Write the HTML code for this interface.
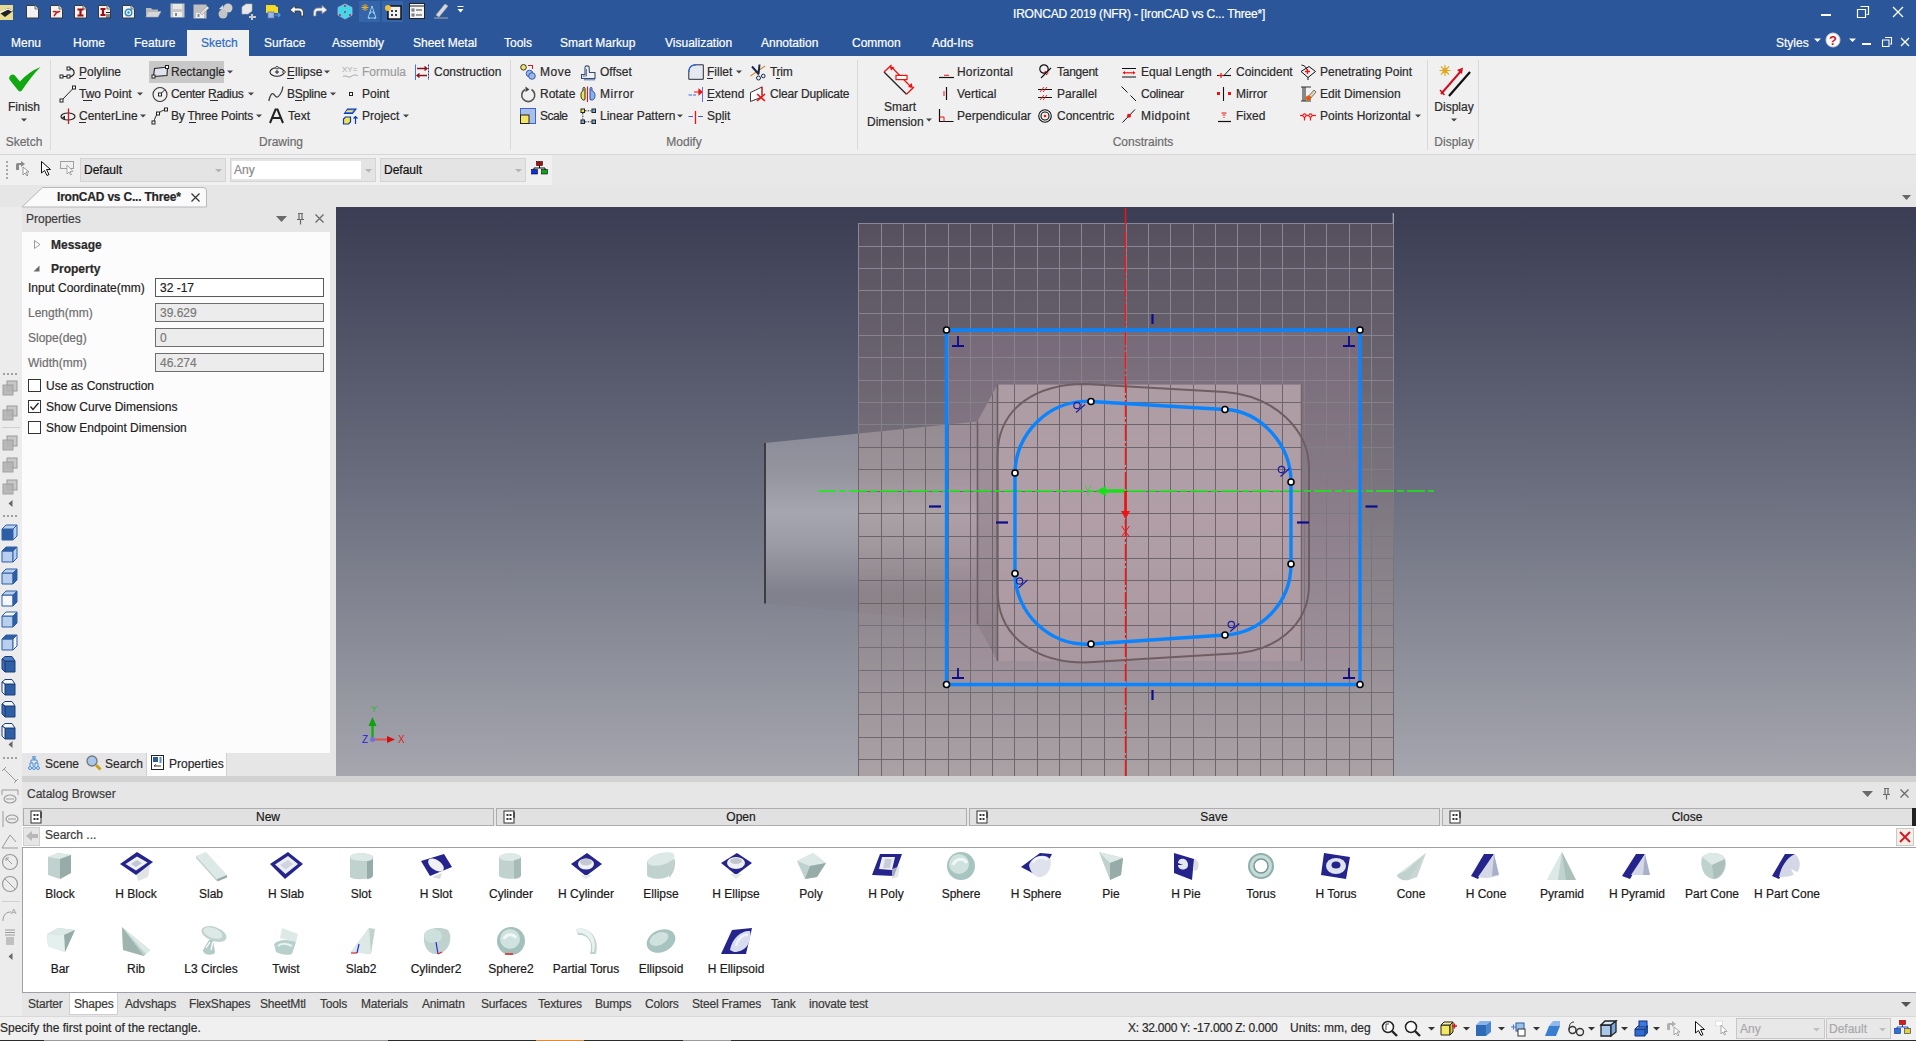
<!DOCTYPE html>
<html><head><meta charset="utf-8">
<style>
*{box-sizing:border-box}
html,body{margin:0;padding:0}
body{width:1916px;height:1041px;position:relative;overflow:hidden;font-family:"Liberation Sans",sans-serif;font-size:12px;color:#1e1e1e;background:#f0f0f0}
.a{position:absolute;white-space:nowrap}
.t{position:absolute;white-space:nowrap;line-height:14px;-webkit-text-stroke:0.2px currentColor}
svg{position:absolute;overflow:visible}
</style></head><body>
<div class="a" style="left:0px;top:0px;width:1916px;height:56px;background:#2b579a"></div>
<div class="t" style="left:1013px;top:7px;color:#fff;letter-spacing:-0.2px">IRONCAD 2019 (NFR) - [IronCAD vs C... Three*]</div>
<div class="a" style="left:187px;top:30px;width:62px;height:27px;background:#f0f0f0"></div>
<div class="t" style="left:11px;top:36px;color:#fff;">Menu</div>
<div class="t" style="left:73px;top:36px;color:#fff;">Home</div>
<div class="t" style="left:134px;top:36px;color:#fff;">Feature</div>
<div class="t" style="left:264px;top:36px;color:#fff;">Surface</div>
<div class="t" style="left:332px;top:36px;color:#fff;">Assembly</div>
<div class="t" style="left:413px;top:36px;color:#fff;">Sheet Metal</div>
<div class="t" style="left:504px;top:36px;color:#fff;">Tools</div>
<div class="t" style="left:560px;top:36px;color:#fff;">Smart Markup</div>
<div class="t" style="left:665px;top:36px;color:#fff;">Visualization</div>
<div class="t" style="left:761px;top:36px;color:#fff;">Annotation</div>
<div class="t" style="left:852px;top:36px;color:#fff;">Common</div>
<div class="t" style="left:932px;top:36px;color:#fff;">Add-Ins</div>
<div class="t" style="left:1776px;top:36px;color:#fff;">Styles</div>
<div class="t" style="left:201px;top:36px;color:#2b6cc4;">Sketch</div>
<div class="a" style="left:0px;top:56px;width:1916px;height:99px;background:#f0f0f0;border-bottom:1px solid #d6d6d6"></div>
<div class="a" style="left:0px;top:155px;width:1916px;height:29px;background:#e9e9e9"></div>
<div class="a" style="left:0px;top:184px;width:1916px;height:23px;background:#e3e3e3"></div>
<div class="a" style="left:0px;top:207px;width:22px;height:809px;background:#ececec"></div>
<div class="a" style="left:22px;top:207px;width:314px;height:569px;background:#e6e6e6"></div>
<div class="a" style="left:22px;top:232px;width:308px;height:521px;background:#fcfcfc"></div>
<div class="a" style="left:22px;top:776px;width:1894px;height:6px;background:#d2d2d2"></div>
<div class="a" style="left:22px;top:782px;width:1894px;height:234px;background:#e6e6e6"></div>
<div class="a" style="left:0px;top:1016px;width:1916px;height:25px;background:#f0f0f0;border-top:1px solid #d9d9d9"></div>
<svg style="left:0px;top:4px" width="14" height="17" viewBox="0 0 14 17"><rect x="0" y="1" width="13" height="15" fill="#e8dc90"/><path d="M0 9L8 4L13 7L5 13Z" fill="#222"/><path d="M0 9L8 5L12 7" stroke="#fff" fill="none" stroke-width="1.2"/></svg>
<svg style="left:25px;top:4px" width="15" height="15" viewBox="0 0 15 15"><path d="M1.5 1.5H10L13.5 5V14H1.5Z" fill="#f2f2f2" stroke="#3a3a3a" stroke-width="1"/><path d="M10 1.5V5H13.5" fill="#ddd" stroke="#555" stroke-width=".8"/></svg>
<svg style="left:49px;top:4px" width="15" height="15" viewBox="0 0 15 15"><path d="M1.5 1.5H10L13.5 5V14H1.5Z" fill="#f2f2f2" stroke="#3a3a3a" stroke-width="1"/><path d="M10 1.5V5H13.5" fill="#ddd" stroke="#555" stroke-width=".8"/><path d="M4 8C6 6 8 10 11 7M5 12L8 8" stroke="#d01818" stroke-width="1.6" fill="none"/></svg>
<svg style="left:73px;top:4px" width="15" height="15" viewBox="0 0 15 15"><path d="M1.5 1.5H10L13.5 5V14H1.5Z" fill="#f2f2f2" stroke="#3a3a3a" stroke-width="1"/><path d="M10 1.5V5H13.5" fill="#ddd" stroke="#555" stroke-width=".8"/><path d="M4.5 5.5H10.5M7.5 5.5V11.5M4.5 11.5H10.5" stroke="#a01010" stroke-width="2.2"/></svg>
<svg style="left:97px;top:4px" width="15" height="15" viewBox="0 0 15 15"><path d="M1.5 1.5H10L13.5 5V14H1.5Z" fill="#f2f2f2" stroke="#3a3a3a" stroke-width="1"/><path d="M10 1.5V5H13.5" fill="#ddd" stroke="#555" stroke-width=".8"/><path d="M3.5 5H8.5M6 5V11M3.5 11H8.5" stroke="#a01010" stroke-width="2.2"/><path d="M9 8.5H13M9 11H13M9 13H13" stroke="#222" stroke-width="1"/></svg>
<svg style="left:121px;top:4px" width="15" height="15" viewBox="0 0 15 15"><path d="M1.5 1.5H10L13.5 5V14H1.5Z" fill="#f2f2f2" stroke="#3a3a3a" stroke-width="1"/><path d="M10 1.5V5H13.5" fill="#ddd" stroke="#555" stroke-width=".8"/><circle cx="7.5" cy="8.5" r="3.3" fill="none" stroke="#2a8ac8" stroke-width="1.4"/><circle cx="7.5" cy="8.5" r="1.2" fill="#2a8ac8"/></svg>
<svg style="left:145px;top:5px" width="17" height="14" viewBox="0 0 17 14"><path d="M1 3H6L7.5 4.5H13V12H1Z" fill="#b8b8b8"/><path d="M3 6.5H16L13 12H1Z" fill="#d8d8d8" stroke="#aaa" stroke-width=".6"/></svg>
<svg style="left:170px;top:3px" width="15" height="15" viewBox="0 0 15 15"><rect x="0.5" y="0.5" width="14" height="14" fill="#c8c8c8"/><rect x="3" y="1" width="9" height="5" fill="#e8e8e8"/><rect x="3" y="9" width="9" height="5" fill="#f0f0f0"/><rect x="5" y="10" width="2" height="3" fill="#888"/></svg>
<svg style="left:193px;top:4px" width="16" height="15" viewBox="0 0 16 15"><rect x="0.5" y="0.5" width="13" height="14" fill="#c0c0c0"/><rect x="3" y="9" width="8" height="5" fill="#f0f0f0"/><rect x="4.5" y="10" width="2" height="3" fill="#888"/><path d="M7 9L14 2L16 4L9 11Z" fill="#ddd" stroke="#999" stroke-width=".6"/></svg>
<svg style="left:217px;top:3px" width="17" height="16" viewBox="0 0 17 16"><circle cx="11" cy="5" r="4.5" fill="#cfcfcf"/><circle cx="6" cy="11" r="4.5" fill="#c4c4c4"/><path d="M2 6L6 2L7 7Z" fill="#ddd"/></svg>
<svg style="left:241px;top:3px" width="17" height="17" viewBox="0 0 17 17"><path d="M1 4L5 1H11L11 8L7 11H1Z" fill="#e8e8e8" stroke="#bbb" stroke-width=".6"/><path d="M11 11V17M8 14H15" stroke="#c8c8c8" stroke-width="2"/></svg>
<svg style="left:265px;top:3px" width="17" height="17" viewBox="0 0 17 17"><path d="M1 2H10L13 5H1Z" fill="#f0d820"/><rect x="1" y="4" width="12" height="6" fill="#f4dc28"/><rect x="3" y="9" width="6" height="6" fill="#a0b8e0" stroke="#5a7ab8" stroke-width=".8"/><path d="M10 12H15M13 10L15 12L13 14" stroke="#5a9ae8" stroke-width="1.2" fill="none"/></svg>
<svg style="left:289px;top:4px" width="15" height="13" viewBox="0 0 15 13"><path d="M1 6L6 1.5V4H10C13 4 14.5 6 14.5 9V12H12V9C12 7.5 11 7 10 7H6V10Z" fill="#f4f4f4" stroke="#333" stroke-width=".8"/></svg>
<svg style="left:313px;top:4px" width="15" height="13" viewBox="0 0 15 13"><path d="M14 6L9 1.5V4H5C2 4 0.5 6 0.5 9V12H3V9C3 7.5 4 7 5 7H9V10Z" fill="#f4f4f4" stroke="#888" stroke-width=".8"/></svg>
<svg style="left:337px;top:3px" width="16" height="17" viewBox="0 0 16 17"><path d="M8 1L15 4.5V12L8 16L1 12V4.5Z" fill="#40d8ec" stroke="#a0b8d8" stroke-width=".8"/><circle cx="8" cy="3" r=".9" fill="#e01020"/><circle cx="8" cy="9" r=".9" fill="#e01020"/><circle cx="3" cy="12" r=".9" fill="#e01020"/><circle cx="13" cy="12" r=".9" fill="#e01020"/></svg>
<div class="a" style="left:359px;top:1px;width:21px;height:21px;background:#3565a8"></div>
<svg style="left:361px;top:3px" width="17" height="17" viewBox="0 0 17 17"><path d="M4 1V8M0.5 4.5H7.5M1.5 2L6.5 7M6.5 2L1.5 7" stroke="#f0b020" stroke-width="1"/><path d="M11 3L7 15M11 3L15 15M9 9H13M8 15H15" stroke="#8ec8ec" stroke-width="1" fill="none"/><circle cx="11" cy="4" r="1" fill="#8ec8ec"/><circle cx="9" cy="10" r="1" fill="#8ec8ec"/><circle cx="13" cy="10" r="1" fill="#8ec8ec"/><circle cx="8" cy="15" r="1" fill="#8ec8ec"/><circle cx="14" cy="15" r="1" fill="#8ec8ec"/></svg>
<div class="a" style="left:382px;top:1px;width:21px;height:21px;background:#3565a8"></div>
<svg style="left:384px;top:3px" width="18" height="17" viewBox="0 0 18 17"><rect x="4" y="3" width="13" height="13" fill="#f0f0f0" stroke="#111" stroke-width="1.5"/><path d="M8 7V9M8 11V13M12 7V9M12 11V13" stroke="#111" stroke-width="1.6"/><circle cx="4" cy="5" r="3" fill="#f0c040"/></svg>
<svg style="left:409px;top:3px" width="16" height="16" viewBox="0 0 16 16"><rect x="0.5" y="0.5" width="15" height="15" fill="#f4f4f4" stroke="#222"/><path d="M1 3H15" stroke="#222"/><rect x="3" y="6" width="2" height="2" fill="none" stroke="#444" stroke-width=".8"/><rect x="3" y="11" width="2" height="2" fill="none" stroke="#444" stroke-width=".8"/><path d="M7 7H13M7 12H13" stroke="#444"/></svg>
<svg style="left:433px;top:2px" width="16" height="17" viewBox="0 0 16 17"><path d="M3 13L12 2L15 4L6 15Z" fill="#d8d8d8" stroke="#aaa" stroke-width=".6"/><path d="M1 16H15" stroke="#aaa"/></svg>
<svg style="left:457px;top:5px" width="7" height="10" viewBox="0 0 7 10"><path d="M0.5 1.5H6.5" stroke="#fff"/><path d="M0.5 4H6.5L3.5 7.5Z" fill="#fff"/></svg>
<div class="a" style="left:1821px;top:14px;width:10px;height:2px;background:#fff"></div>
<svg style="left:1857px;top:6px" width="12" height="12" viewBox="0 0 12 12"><path d="M3.5 0.5H11.5V8.5H9.5M0.5 3.5H8.5V11.5H0.5Z" fill="none" stroke="#fff" stroke-width="1.2"/></svg>
<svg style="left:1892px;top:6px" width="12" height="12" viewBox="0 0 12 12"><path d="M1 1L11 11M11 1L1 11" stroke="#fff" stroke-width="1.3"/></svg>
<svg style="left:1814px;top:38px" width="8" height="5" viewBox="0 0 8 5"><path d="M0 0.5H7L3.5 4Z" fill="#fff"/></svg>
<svg style="left:1825px;top:32px" width="16" height="16" viewBox="0 0 16 16"><circle cx="8" cy="8" r="7" fill="#fff" stroke="#d0d0d0"/><text x="8" y="13" text-anchor="middle" font-size="13" font-weight="bold" fill="#e01020" font-family="Liberation Sans">?</text></svg>
<svg style="left:1849px;top:38px" width="8" height="5" viewBox="0 0 8 5"><path d="M0 0.5H7L3.5 4Z" fill="#fff"/></svg>
<div class="a" style="left:1862px;top:43px;width:9px;height:2px;background:#fff"></div>
<svg style="left:1882px;top:37px" width="10" height="10" viewBox="0 0 10 10"><path d="M3 0.5H9.5V7H8M0.5 3H7V9.5H0.5Z" fill="none" stroke="#fff" stroke-width="1.1"/></svg>
<svg style="left:1900px;top:37px" width="10" height="10" viewBox="0 0 10 10"><path d="M1 1L9 9M9 1L1 9" stroke="#fff" stroke-width="1.3"/></svg>
<div class="a" style="left:50px;top:60px;width:1px;height:90px;background:#d9d9d9"></div>
<div class="a" style="left:510px;top:60px;width:1px;height:90px;background:#d9d9d9"></div>
<div class="a" style="left:857px;top:60px;width:1px;height:90px;background:#d9d9d9"></div>
<div class="a" style="left:1427px;top:60px;width:1px;height:90px;background:#d9d9d9"></div>
<div class="a" style="left:1478px;top:60px;width:1px;height:90px;background:#d9d9d9"></div>
<div class="t" style="left:-76px;width:200px;text-align:center;top:135px;color:#6d6d6d;">Sketch</div>
<div class="t" style="left:181px;width:200px;text-align:center;top:135px;color:#6d6d6d;">Drawing</div>
<div class="t" style="left:584px;width:200px;text-align:center;top:135px;color:#6d6d6d;">Modify</div>
<div class="t" style="left:1043px;width:200px;text-align:center;top:135px;color:#6d6d6d;">Constraints</div>
<div class="t" style="left:1354px;width:200px;text-align:center;top:135px;color:#6d6d6d;">Display</div>
<svg style="left:8px;top:66px" width="34" height="27" viewBox="0 0 34 27"><path d="M1.5 10.5Q3.5 7.5 6.5 9L11.9 15.5Q21 5.5 32.5 1Q24 9.5 13.8 24.5Q12 26.5 10.2 24.5L1.8 14Q0.5 12.5 1.5 10.5Z" fill="#12a812"/></svg>
<div class="t" style="left:-76px;width:200px;text-align:center;top:100px;color:#2b2b2b;">Finish</div>
<svg style="left:21px;top:118px" width="6" height="4" viewBox="0 0 6 4"><path d="M0 0.5h6l-3 3z" fill="#444"/></svg>
<div class="a" style="left:149px;top:61px;width:75px;height:22px;background:#c8c8c8"></div>
<svg style="left:60px;top:64px" width="16" height="16" viewBox="0 0 16 16"><path d="M1.5 12.5H8.5" stroke="#222" fill="none"/><path d="M8.5 4.5C16 3.5 16 13.5 8.5 12.5" stroke="#222" fill="none" stroke-width="1.2"/><rect x="0.0" y="11.0" width="3" height="3" fill="#fff" stroke="#222" stroke-width="1"/><rect x="7.0" y="11.0" width="3" height="3" fill="#fff" stroke="#222" stroke-width="1"/><rect x="7.0" y="3.0" width="3" height="3" fill="#fff" stroke="#222" stroke-width="1"/></svg>
<div class="t" style="left:79px;top:65px;color:#2b2b2b;">Polyline</div>
<div class="a" style="left:79px;top:78px;width:7px;height:1px;background:#2b2b2b"></div>
<svg style="left:60px;top:86px" width="16" height="16" viewBox="0 0 16 16"><path d="M1.5 14.5L14 1.5" stroke="#222" fill="none"/><rect x="0.0" y="13.0" width="3" height="3" fill="#fff" stroke="#222" stroke-width="1"/><rect x="12.5" y="0.0" width="3" height="3" fill="#fff" stroke="#222" stroke-width="1"/></svg>
<div class="t" style="left:79px;top:87px;color:#2b2b2b;">Two Point</div>
<div class="a" style="left:83px;top:100px;width:9px;height:1px;background:#2b2b2b"></div>
<svg style="left:137px;top:92px" width="6" height="4" viewBox="0 0 6 4"><path d="M0 0.5h6l-3 3z" fill="#444"/></svg>
<svg style="left:60px;top:108px" width="16" height="16" viewBox="0 0 16 16"><ellipse cx="8" cy="8.5" rx="7" ry="3.5" stroke="#222" fill="none" stroke-width="1.2"/><path d="M2 9.5l3 -2v4z" fill="#222"/><path d="M8.5 0.5V16" stroke="#d2141e" stroke-width="1.3"/></svg>
<div class="t" style="left:79px;top:109px;color:#2b2b2b;">CenterLine</div>
<div class="a" style="left:79px;top:122px;width:7px;height:1px;background:#2b2b2b"></div>
<svg style="left:140px;top:114px" width="6" height="4" viewBox="0 0 6 4"><path d="M0 0.5h6l-3 3z" fill="#444"/></svg>
<svg style="left:152px;top:64px" width="16" height="16" viewBox="0 0 16 16"><path d="M1.5 12.5L15 11.5L15.5 3L2.5 4.5Z" fill="#dfe3ee" stroke="#222" stroke-width="1.1"/><rect x="0.0" y="11.0" width="3" height="3" fill="#fff" stroke="#222" stroke-width="1"/><rect x="13.5" y="1.5" width="3" height="3" fill="#fff" stroke="#222" stroke-width="1"/></svg>
<div class="t" style="left:171px;top:65px;color:#2b2b2b;">Rectangle</div>
<svg style="left:227px;top:70px" width="6" height="4" viewBox="0 0 6 4"><path d="M0 0.5h6l-3 3z" fill="#444"/></svg>
<svg style="left:152px;top:86px" width="16" height="16" viewBox="0 0 16 16"><circle cx="8" cy="8.5" r="7" fill="none" stroke="#333" stroke-width="1.1"/><path d="M8 8.5L13 3.5" stroke="#222"/><rect x="6.5" y="7.0" width="3" height="3" fill="#fff" stroke="#222" stroke-width="1"/></svg>
<div class="t" style="left:171px;top:87px;color:#2b2b2b;letter-spacing:-0.33px">Center Radius</div>
<div class="a" style="left:210px;top:100px;width:8px;height:1px;background:#2b2b2b"></div>
<svg style="left:248px;top:92px" width="6" height="4" viewBox="0 0 6 4"><path d="M0 0.5h6l-3 3z" fill="#444"/></svg>
<svg style="left:152px;top:108px" width="16" height="16" viewBox="0 0 16 16"><path d="M1.5 14.5C3 10 4 7 6 5.5S11 2 14 1.5" stroke="#222" fill="none"/><rect x="0.0" y="13.0" width="3" height="3" fill="#fff" stroke="#222" stroke-width="1"/><rect x="4.5" y="4.0" width="3" height="3" fill="#fff" stroke="#222" stroke-width="1"/><rect x="12.5" y="0.0" width="3" height="3" fill="#fff" stroke="#222" stroke-width="1"/></svg>
<div class="t" style="left:171px;top:109px;color:#2b2b2b;letter-spacing:-0.21px">By Three Points</div>
<div class="a" style="left:189px;top:122px;width:7px;height:1px;background:#2b2b2b"></div>
<svg style="left:256px;top:114px" width="6" height="4" viewBox="0 0 6 4"><path d="M0 0.5h6l-3 3z" fill="#444"/></svg>
<svg style="left:269px;top:64px" width="16" height="16" viewBox="0 0 16 16"><ellipse cx="8" cy="8" rx="7" ry="4.3" fill="none" stroke="#222" stroke-width="1.1"/><path d="M8 6v4M6 8h4" stroke="#222"/><circle cx="8" cy="3.7" r="1.3" fill="#fff" stroke="#222" stroke-width=".8"/><circle cx="15" cy="8" r="1.3" fill="#fff" stroke="#222" stroke-width=".8"/></svg>
<div class="t" style="left:287px;top:65px;color:#2b2b2b;">Ellipse</div>
<div class="a" style="left:287px;top:78px;width:7px;height:1px;background:#2b2b2b"></div>
<svg style="left:324px;top:70px" width="6" height="4" viewBox="0 0 6 4"><path d="M0 0.5h6l-3 3z" fill="#444"/></svg>
<svg style="left:268px;top:86px" width="16" height="16" viewBox="0 0 16 16"><path d="M0.8 15C2 9 4 6 6 8.5S9 13 12 8.5S14.5 3 14.8 0.5" stroke="#444" fill="none" stroke-width="1.3"/></svg>
<div class="t" style="left:287px;top:87px;color:#2b2b2b;letter-spacing:-0.25px">BSpline</div>
<div class="a" style="left:295px;top:100px;width:7px;height:1px;background:#2b2b2b"></div>
<svg style="left:330px;top:92px" width="6" height="4" viewBox="0 0 6 4"><path d="M0 0.5h6l-3 3z" fill="#444"/></svg>
<svg style="left:269px;top:108px" width="16" height="16" viewBox="0 0 16 16"><path d="M1 15L6.5 1.5H8.5L14 15M3.5 10H11.5" stroke="#222" fill="none" stroke-width="2"/></svg>
<div class="t" style="left:288px;top:109px;color:#2b2b2b;">Text</div>
<svg style="left:342px;top:64px" width="18" height="16" viewBox="0 0 18 16"><text x="0" y="8" font-size="8" fill="#aaa" font-family="Liberation Sans">XY=</text><path d="M1 12.5C4 10.5 6 14.5 9 12.5S14 10.5 16 12" stroke="#aaa" fill="none"/></svg>
<div class="t" style="left:362px;top:65px;color:#9d9d9d;">Formula</div>
<div class="a" style="left:349px;top:92px;width:4px;height:4px;border:1px solid #222;background:#fff"></div>
<div class="t" style="left:362px;top:87px;color:#2b2b2b;">Point</div>
<svg style="left:342px;top:108px" width="17" height="16" viewBox="0 0 17 16"><path d="M2.5 5.5L5.5 1H14L10.5 5.5Z" fill="#4a7dd8" stroke="#0b39b8" stroke-width="1.1"/><path d="M3.5 4L5.5 2.2H12L10 4Z" fill="#f1e26a"/><path d="M1.5 11L3.5 9H8.5V14L6.5 16H1.5Z" fill="#f4e34a" stroke="#0b39b8" stroke-width="1.2"/><path d="M13.5 16V8.5M11.5 10.5L13.5 8.5L15.5 10.5" stroke="#0b39b8" stroke-width="1.2" fill="none"/></svg>
<div class="t" style="left:362px;top:109px;color:#2b2b2b;">Project</div>
<svg style="left:403px;top:114px" width="6" height="4" viewBox="0 0 6 4"><path d="M0 0.5h6l-3 3z" fill="#444"/></svg>
<svg style="left:415px;top:64px" width="16" height="16" viewBox="0 0 16 16"><path d="M0.5 0.5V16" stroke="#3f78d6"/><path d="M13.5 0.5V16" stroke="#1f2f8a" stroke-dasharray="2 1"/><path d="M2 4.5H12M9.5 2.5L12 4.5L9.5 6.5" stroke="#8b0f1a" fill="none" stroke-width="1.3"/><path d="M12 11.5H2M4.5 9.5L2 11.5L4.5 13.5" stroke="#8b0f1a" fill="none" stroke-width="1.3"/></svg>
<div class="t" style="left:434px;top:65px;color:#2b2b2b;">Construction</div>
<svg style="left:520px;top:64px" width="16" height="16" viewBox="0 0 16 16"><circle cx="3.5" cy="3.3" r="2.8" fill="#f3e26a" stroke="#222" stroke-width=".9"/><circle cx="9.5" cy="9.5" r="3.3" fill="#9cb8e8" stroke="#2a4fa8" stroke-width=".9"/><circle cx="12" cy="12" r="3.3" fill="#9cb8e8" stroke="#2a4fa8" stroke-width=".9"/><path d="M8 1.5H12.5V5" stroke="#cc1d2a" fill="none" stroke-width="1.1"/></svg>
<div class="t" style="left:540px;top:65px;color:#2b2b2b;letter-spacing:0.5px">Move</div>
<svg style="left:520px;top:86px" width="16" height="16" viewBox="0 0 16 16"><path d="M11.5 3.5A6.5 6.5 0 1 1 5 3.5" stroke="#555" stroke-width="1.6" fill="none"/><path d="M5.5 0.5L9.5 3.5L5.5 6Z" fill="#444"/></svg>
<div class="t" style="left:540px;top:87px;color:#2b2b2b;">Rotate</div>
<svg style="left:520px;top:108px" width="16" height="16" viewBox="0 0 16 16"><rect x="0.5" y="0.5" width="15" height="15" fill="#a9bfea" stroke="#3a68c8"/><rect x="0.5" y="7" width="8.5" height="8.5" fill="#f4e564" stroke="#222" stroke-width="1"/></svg>
<div class="t" style="left:540px;top:109px;color:#2b2b2b;letter-spacing:-0.5px">Scale</div>
<svg style="left:580px;top:64px" width="16" height="16" viewBox="0 0 16 16"><path d="M1.5 14.5V10.5H5V3.5C5 1.5 7.5 1.5 9 2.5L9.5 8.5H15V14.5Z" fill="none" stroke="#3a4a6a" stroke-width="1.1"/><path d="M3 12.5V12H6.5V5" stroke="#4a6ab0" fill="none" stroke-width=".9"/><path d="M4 15.8H15" stroke="#4a6ab0"/></svg>
<div class="t" style="left:600px;top:65px;color:#2b2b2b;">Offset</div>
<svg style="left:580px;top:86px" width="16" height="16" viewBox="0 0 16 16"><path d="M1 9.5C1 6 2 5 3 5V2.5C3 1 5 1 5 2.5V13.5C3 15 1 13 1 9.5Z" fill="#f4e34a" stroke="#222"/><path d="M7.5 0.5V16" stroke="#f01010" stroke-width="1.1"/><path d="M10 2.5C10 1 12 1 12 2.5V5C13 5 15 6 15 9.5S13 15 10 13.5Z" fill="#8bb0ea" stroke="#2a4fa8"/></svg>
<div class="t" style="left:600px;top:87px;color:#2b2b2b;letter-spacing:0.5px">Mirror</div>
<svg style="left:580px;top:108px" width="16" height="16" viewBox="0 0 16 16"><rect x="1" y="1" width="3.5" height="3.5" fill="#f4e34a" stroke="#222"/><rect x="12" y="1" width="3.5" height="3.5" fill="#7fa8e6" stroke="#222"/><rect x="1" y="12" width="3.5" height="3.5" fill="#7fa8e6" stroke="#222"/><rect x="12" y="12" width="3.5" height="3.5" fill="#7fa8e6" stroke="#222"/><path d="M5 2.8H11.5M5 13.8H11.5M2.8 5V11.5" stroke="#222" stroke-dasharray="1.5 1.2"/></svg>
<div class="t" style="left:600px;top:109px;color:#2b2b2b;">Linear Pattern</div>
<svg style="left:677px;top:114px" width="6" height="4" viewBox="0 0 6 4"><path d="M0 0.5h6l-3 3z" fill="#444"/></svg>
<svg style="left:688px;top:64px" width="16" height="16" viewBox="0 0 16 16"><path d="M0.8 15.3V8C0.8 3 3.5 0.8 8 0.8H15.3V15.3Z" fill="#e4e8f0" stroke="#2a2a3a" stroke-width="1"/><path d="M0.8 8C0.8 3 3.5 0.8 8 0.8" stroke="#2a6cd8" fill="none" stroke-width="1.2"/></svg>
<div class="t" style="left:707px;top:65px;color:#2b2b2b;">Fillet</div>
<div class="a" style="left:707px;top:78px;width:6px;height:1px;background:#2b2b2b"></div>
<svg style="left:736px;top:70px" width="6" height="4" viewBox="0 0 6 4"><path d="M0 0.5h6l-3 3z" fill="#444"/></svg>
<svg style="left:688px;top:86px" width="16" height="16" viewBox="0 0 16 16"><path d="M0.5 9H4M5 9H8" stroke="#3f6fd0"/><path d="M6 6H14M11 3.5L14 6L11 8.5Z" stroke="#f01010" fill="#f01010" stroke-width="1.2"/><path d="M14.5 1V16" stroke="#6a6ae8"/></svg>
<div class="t" style="left:707px;top:87px;color:#2b2b2b;">Extend</div>
<div class="a" style="left:707px;top:100px;width:6px;height:1px;background:#2b2b2b"></div>
<svg style="left:688px;top:108px" width="16" height="16" viewBox="0 0 16 16"><path d="M0.5 8.5H5M10 8.5H15" stroke="#3f5fd0"/><path d="M7.5 3V16" stroke="#f01010" stroke-width="1.3"/></svg>
<div class="t" style="left:707px;top:109px;color:#2b2b2b;">Split</div>
<div class="a" style="left:721px;top:122px;width:3px;height:1px;background:#2b2b2b"></div>
<svg style="left:750px;top:64px" width="16" height="16" viewBox="0 0 16 16"><path d="M0.5 12L15 2" stroke="#d88a30" stroke-width="1.2"/><path d="M2 2.5L9 10.5M9.5 0.5L8.5 10" stroke="#1a2a4a" stroke-width="2"/><circle cx="8.5" cy="14" r="2" fill="none" stroke="#1a2a4a"/><circle cx="13.3" cy="12" r="1.8" fill="none" stroke="#1a2a4a"/></svg>
<div class="t" style="left:770px;top:65px;color:#2b2b2b;letter-spacing:-0.3px">Trim</div>
<div class="a" style="left:776px;top:78px;width:4px;height:1px;background:#2b2b2b"></div>
<svg style="left:750px;top:86px" width="16" height="16" viewBox="0 0 16 16"><path d="M0.5 6.5L12 1V11L0.5 15.5Z" fill="#fff" stroke="#222" stroke-width=".9"/><path d="M7 8L15 15M15 8L7 15" stroke="#f01010" stroke-width="1.6"/><path d="M12 0.5V9" stroke="#f01010"/></svg>
<div class="t" style="left:770px;top:87px;color:#2b2b2b;letter-spacing:-0.18px">Clear Duplicate</div>
<svg style="left:880px;top:62px" width="40" height="36" viewBox="0 0 40 36"><path d="M4 10L26.5 32.2" stroke="#222" stroke-width="1.3"/><path d="M4 10L11.5 3M26.5 32.2L34 25" stroke="#f01010" stroke-width="1.3"/><path d="M11.5 5L31 25" stroke="#f01010" stroke-width="1.2"/><path d="M9.5 4L14.5 5.5L11 8.5Z M33 26L28 25L31.5 21Z" fill="#f01010"/><rect x="16" y="13.4" width="11" height="4.2" fill="#fff" stroke="#f01010" stroke-width="1.2"/></svg>
<div class="t" style="left:800px;width:200px;text-align:center;top:100px;color:#2b2b2b;">Smart</div>
<div class="t" style="left:867px;top:115px;color:#2b2b2b;">Dimension</div>
<svg style="left:926px;top:118px" width="6" height="4" viewBox="0 0 6 4"><path d="M0 0.5h6l-3 3z" fill="#444"/></svg>
<svg style="left:939px;top:64px" width="16" height="16" viewBox="0 0 16 16"><path d="M0 13.5H15" stroke="#111" stroke-width="1.2"/><path d="M5 11.3H10" stroke="#f01010" stroke-width="1"/></svg>
<div class="t" style="left:957px;top:65px;color:#2b2b2b;letter-spacing:0.2px">Horizontal</div>
<svg style="left:939px;top:86px" width="16" height="16" viewBox="0 0 16 16"><path d="M7.5 1V14" stroke="#111" stroke-width="1.2"/><path d="M5 5V10" stroke="#f01010" stroke-width="1"/></svg>
<div class="t" style="left:957px;top:87px;color:#2b2b2b;">Vertical</div>
<svg style="left:939px;top:108px" width="16" height="16" viewBox="0 0 16 16"><path d="M0.5 1V13.5H14.5" stroke="#111" fill="none" stroke-width="1.2"/><path d="M0.5 9H5V13.5" stroke="#f01010" fill="none"/></svg>
<div class="t" style="left:957px;top:109px;color:#2b2b2b;">Perpendicular</div>
<svg style="left:1038px;top:64px" width="16" height="16" viewBox="0 0 16 16"><circle cx="6" cy="5" r="4.2" fill="none" stroke="#111" stroke-width="1.2"/><path d="M3 14L13 4" stroke="#111" stroke-width="1.1"/><path d="M5.5 9L8 7M8 11L10.5 9" stroke="#f01010"/></svg>
<div class="t" style="left:1057px;top:65px;color:#2b2b2b;letter-spacing:-0.25px">Tangent</div>
<svg style="left:1038px;top:86px" width="16" height="16" viewBox="0 0 16 16"><path d="M0 3.5H14M0 11.5H14" stroke="#111" stroke-width="1.1"/><path d="M2 6L6 1M5 6L9 1M2 14L6 9M5 14L9 9" stroke="#f01010" stroke-width=".9"/></svg>
<div class="t" style="left:1057px;top:87px;color:#2b2b2b;">Parallel</div>
<svg style="left:1038px;top:108px" width="16" height="16" viewBox="0 0 16 16"><circle cx="7" cy="8" r="6.3" fill="none" stroke="#111" stroke-width="1.1"/><circle cx="7" cy="8" r="4" fill="none" stroke="#111" stroke-width="1.1"/><circle cx="7" cy="8" r="1.3" fill="#f01010"/></svg>
<div class="t" style="left:1057px;top:109px;color:#2b2b2b;">Concentric</div>
<svg style="left:1122px;top:64px" width="16" height="16" viewBox="0 0 16 16"><path d="M0 4.5H14M0 13H14" stroke="#111" stroke-width="1.1"/><path d="M2 8.8H12" stroke="#f01010" stroke-width="1.2"/><path d="M0.5 8.8L3 7V10.6ZM13.5 8.8L11 7V10.6Z" fill="#f01010"/></svg>
<div class="t" style="left:1141px;top:65px;color:#2b2b2b;">Equal Length</div>
<svg style="left:1121px;top:86px" width="16" height="16" viewBox="0 0 16 16"><path d="M0.5 0.5L6.5 6.5M9.5 9.5L15 15" stroke="#111" stroke-width="1"/></svg>
<div class="t" style="left:1141px;top:87px;color:#2b2b2b;letter-spacing:-0.24px">Colinear</div>
<svg style="left:1122px;top:108px" width="16" height="16" viewBox="0 0 16 16"><path d="M0.5 14.5L13 1.5" stroke="#111" stroke-width="1"/><circle cx="7" cy="7.8" r="2" fill="#f01010"/></svg>
<div class="t" style="left:1141px;top:109px;color:#2b2b2b;letter-spacing:0.45px">Midpoint</div>
<svg style="left:1217px;top:64px" width="16" height="16" viewBox="0 0 16 16"><path d="M0 11.5H14" stroke="#111" stroke-width="1.1"/><path d="M7 11.5L14 4" stroke="#111" stroke-width="1"/><path d="M4 9V14M1.5 11.5H6.5" stroke="#f01010" stroke-width="1.2"/></svg>
<div class="t" style="left:1236px;top:65px;color:#2b2b2b;">Coincident</div>
<svg style="left:1217px;top:86px" width="16" height="16" viewBox="0 0 16 16"><rect x="0" y="6" width="3" height="3" fill="#f01010"/><rect x="11" y="6" width="3" height="3" fill="#f01010"/><path d="M6.5 1V15" stroke="#111" stroke-width="1.1"/></svg>
<div class="t" style="left:1236px;top:87px;color:#2b2b2b;">Mirror</div>
<svg style="left:1217px;top:108px" width="16" height="16" viewBox="0 0 16 16"><path d="M1 13.5H14" stroke="#111" stroke-width="1.2"/><path d="M4.5 5H9.5M5.5 7H8.5M7 9V10" stroke="#f01010" stroke-width="1"/></svg>
<div class="t" style="left:1236px;top:109px;color:#2b2b2b;">Fixed</div>
<svg style="left:1300px;top:64px" width="17" height="17" viewBox="0 0 17 17"><path d="M1 7.5L9 2.5L15.5 7.5L8 13.5Z" fill="none" stroke="#111" stroke-width="1"/><path d="M8 13.5V16" stroke="#111"/><path d="M1.5 1C5 1.5 7 4 7.5 7" stroke="#111" fill="none"/><path d="M7.5 5V10M5 7.5H10" stroke="#f01010" stroke-width="1.3"/></svg>
<div class="t" style="left:1320px;top:65px;color:#2b2b2b;">Penetrating Point</div>
<svg style="left:1300px;top:86px" width="17" height="16" viewBox="0 0 17 16"><path d="M1 1H11M1 15H11M3 1V15M5 1V15" stroke="#333" stroke-width="1.1"/><path d="M7 12L14 4L16 6L9 14Z" fill="#e8d8b0" stroke="#555" stroke-width=".8"/><circle cx="8.5" cy="12" r="2.6" fill="#e05a10"/></svg>
<div class="t" style="left:1320px;top:87px;color:#2b2b2b;">Edit Dimension</div>
<svg style="left:1300px;top:108px" width="17" height="16" viewBox="0 0 17 16"><path d="M0 7.5H16" stroke="#f01010" stroke-width="1.2"/><circle cx="4.5" cy="7.5" r="1.6" fill="#fff" stroke="#f01010" stroke-width="1.1"/><circle cx="10.5" cy="7.5" r="1.6" fill="#fff" stroke="#f01010" stroke-width="1.1"/><path d="M4.5 9V12.5M10.5 9V12.5" stroke="#f01010" stroke-width="1.2"/></svg>
<div class="t" style="left:1320px;top:109px;color:#2b2b2b;">Points Horizontal</div>
<svg style="left:1415px;top:114px" width="6" height="4" viewBox="0 0 6 4"><path d="M0 0.5h6l-3 3z" fill="#444"/></svg>
<svg style="left:1439px;top:63px" width="34" height="34" viewBox="0 0 34 34"><path d="M6 2V13M0.5 7.5H11.5M2 3.5L10 11.5M10 3.5L2 11.5" stroke="#e0a820" stroke-width="1.2"/><circle cx="6" cy="7.5" r="2.5" fill="#e0a820"/><path d="M2 31L22 8" stroke="#d01020" stroke-width="2"/><path d="M18 7L24 4.5L23 11Z" fill="#d01020"/><path d="M1 27L5.5 32" stroke="#d01020" stroke-width="1.5"/><path d="M10 33L31 9" stroke="#111" stroke-width="2.2"/></svg>
<div class="t" style="left:1354px;width:200px;text-align:center;top:100px;color:#2b2b2b;">Display</div>
<svg style="left:1451px;top:118px" width="6" height="4" viewBox="0 0 6 4"><path d="M0 0.5h6l-3 3z" fill="#444"/></svg>
<div class="a" style="left:0px;top:155px;width:552px;height:30px;background:#f0f0f0"></div>
<div class="a" style="left:552px;top:155px;width:1364px;height:30px;background:#e8e8e8"></div>
<div class="a" style="left:6px;top:161px;width:2px;height:2px;background:#a8a8a8"></div>
<div class="a" style="left:6px;top:165px;width:2px;height:2px;background:#a8a8a8"></div>
<div class="a" style="left:6px;top:169px;width:2px;height:2px;background:#a8a8a8"></div>
<div class="a" style="left:6px;top:173px;width:2px;height:2px;background:#a8a8a8"></div>
<div class="a" style="left:6px;top:177px;width:2px;height:2px;background:#a8a8a8"></div>
<svg style="left:15px;top:160px" width="17" height="16" viewBox="0 0 17 16"><path d="M1 10V5C1 3.5 2 3 3 3H6V1L10 4L6 7V5H4V10Z" fill="#8a8a8a"/><path d="M8 7V15L10 13L12 16L13 15L11 12H14Z" fill="#fff" stroke="#8a8a8a" stroke-width=".9"/></svg>
<svg style="left:41px;top:161px" width="10" height="15" viewBox="0 0 10 15"><path d="M0.5 0.5V12L3.5 9.5L6 14.5L8 13.5L5.5 8.5H9.5Z" fill="#fff" stroke="#111" stroke-width="1"/></svg>
<svg style="left:60px;top:161px" width="15" height="15" viewBox="0 0 15 15"><rect x="0.5" y="0.5" width="13" height="7" fill="none" stroke="#a0a0a0"/><path d="M7 4V13L9 11L10.5 14L11.5 13.5L10 10.5H13Z" fill="#fff" stroke="#a0a0a0" stroke-width=".9"/></svg>
<div class="a" style="left:80px;top:158px;width:146px;height:24px;background:#e4e4e4;border:1px solid #d4d4d4"></div>
<div class="t" style="left:84px;top:163px;color:#111;">Default</div>
<svg style="left:215px;top:169px" width="7" height="4" viewBox="0 0 7 4"><path d="M0 0H7L3.5 3.5Z" fill="#b4b4b4"/></svg>
<div class="a" style="left:230px;top:158px;width:146px;height:24px;background:#e4e4e4;border:1px solid #d4d4d4"></div>
<div class="a" style="left:232px;top:161px;width:129px;height:18px;background:#fff"></div>
<div class="t" style="left:234px;top:163px;color:#8a8a8a;">Any</div>
<svg style="left:365px;top:169px" width="7" height="4" viewBox="0 0 7 4"><path d="M0 0H7L3.5 3.5Z" fill="#b4b4b4"/></svg>
<div class="a" style="left:380px;top:158px;width:146px;height:24px;background:#e4e4e4;border:1px solid #d4d4d4"></div>
<div class="t" style="left:384px;top:163px;color:#111;">Default</div>
<svg style="left:515px;top:169px" width="7" height="4" viewBox="0 0 7 4"><path d="M0 0H7L3.5 3.5Z" fill="#b4b4b4"/></svg>
<svg style="left:531px;top:161px" width="17" height="14" viewBox="0 0 17 14"><rect x="5.5" y="0.5" width="6" height="4" fill="#a01010" stroke="#300" stroke-width=".6"/><path d="M8.5 4.5V7M3 9V7H14V9" stroke="#111" fill="none"/><rect x="0.5" y="8.5" width="6" height="4.5" fill="#1030e0" stroke="#001" stroke-width=".6"/><rect x="10.5" y="8.5" width="6" height="4.5" fill="#10a020" stroke="#010" stroke-width=".6"/></svg>
<div class="a" style="left:0px;top:185px;width:1916px;height:22px;background:#e6e6e6"></div>
<svg style="left:22px;top:186px" width="186" height="22" viewBox="0 0 186 22"><path d="M0 21L20.5 1.5H181Q184.5 1.5 184.5 5V21Z" fill="#fafafa" stroke="#b8b8b8" stroke-width="1"/></svg>
<div class="t" style="left:57px;top:190px;color:#262626;font-weight:bold;letter-spacing:-0.2px">IronCAD vs C... Three*</div>
<svg style="left:191px;top:193px" width="9" height="9" viewBox="0 0 9 9"><path d="M0.5 0.5L8.5 8.5M8.5 0.5L0.5 8.5" stroke="#333" stroke-width="1.2"/></svg>
<svg style="left:1902px;top:195px" width="9" height="5" viewBox="0 0 9 5"><path d="M0 0H9L4.5 5Z" fill="#666"/></svg>
<div class="a" style="left:330px;top:207px;width:6px;height:569px;background:#e6e6e6"></div>
<div class="t" style="left:26px;top:212px;color:#3c3c3c;">Properties</div>
<svg style="left:276px;top:216px" width="11" height="6" viewBox="0 0 11 6"><path d="M0 0H11L5.5 6Z" fill="#6a6a6a"/></svg>
<svg style="left:296px;top:213px" width="9" height="12" viewBox="0 0 9 12"><path d="M2 0.5H7M3 0.5V6M6 0.5V6M1 6.5H8M4.5 6.5V11.5" stroke="#6a6a6a" stroke-width="1.2" fill="none"/></svg>
<svg style="left:315px;top:214px" width="9" height="9" viewBox="0 0 9 9"><path d="M0.5 0.5L8.5 8.5M8.5 0.5L0.5 8.5" stroke="#6a6a6a" stroke-width="1.3"/></svg>
<svg style="left:34px;top:240px" width="7" height="9" viewBox="0 0 7 9"><path d="M0.5 0.5L6 4.5L0.5 8.5Z" fill="none" stroke="#9a9a9a"/></svg>
<div class="t" style="left:51px;top:238px;color:#2a2a2a;font-weight:bold;">Message</div>
<svg style="left:33px;top:265px" width="7" height="7" viewBox="0 0 7 7"><path d="M6.5 0.5V6.5H0.5Z" fill="#6a6a6a"/></svg>
<div class="t" style="left:51px;top:262px;color:#2a2a2a;font-weight:bold;">Property</div>
<div class="t" style="left:28px;top:281px;color:#1e1e1e;">Input Coordinate(mm)</div>
<div class="a" style="left:155px;top:278px;width:169px;height:19px;background:#fff;border:1px solid #5a5a5a"></div>
<div class="t" style="left:160px;top:281px;color:#1e1e1e;">32 -17</div>
<div class="t" style="left:28px;top:306px;color:#6e6e6e;">Length(mm)</div>
<div class="a" style="left:155px;top:303px;width:169px;height:19px;background:#ececec;border:1px solid #6e6e6e"></div>
<div class="t" style="left:160px;top:306px;color:#7a7a7a;">39.629</div>
<div class="t" style="left:28px;top:331px;color:#6e6e6e;">Slope(deg)</div>
<div class="a" style="left:155px;top:328px;width:169px;height:19px;background:#ececec;border:1px solid #6e6e6e"></div>
<div class="t" style="left:160px;top:331px;color:#7a7a7a;">0</div>
<div class="t" style="left:28px;top:356px;color:#6e6e6e;">Width(mm)</div>
<div class="a" style="left:155px;top:353px;width:169px;height:19px;background:#ececec;border:1px solid #6e6e6e"></div>
<div class="t" style="left:160px;top:356px;color:#7a7a7a;">46.274</div>
<div class="a" style="left:28px;top:379px;width:13px;height:13px;background:#fff;border:1px solid #333"></div>
<div class="t" style="left:46px;top:379px;color:#1e1e1e;">Use as Construction</div>
<div class="a" style="left:28px;top:400px;width:13px;height:13px;background:#fff;border:1px solid #333"></div>
<svg style="left:28px;top:400px" width="13" height="13" viewBox="0 0 13 13"><path d="M2.5 6.5L5 9.5L10.5 3" stroke="#222" stroke-width="1.3" fill="none"/></svg>
<div class="t" style="left:46px;top:400px;color:#1e1e1e;">Show Curve Dimensions</div>
<div class="a" style="left:28px;top:421px;width:13px;height:13px;background:#fff;border:1px solid #333"></div>
<div class="t" style="left:46px;top:421px;color:#1e1e1e;">Show Endpoint Dimension</div>
<div class="a" style="left:22px;top:753px;width:308px;height:23px;background:#e6e6e6"></div>
<div class="a" style="left:146px;top:753px;width:81px;height:24px;background:#fcfcfc;border:1px solid #d0d0d0;border-top:none"></div>
<div class="a" style="left:22px;top:776px;width:314px;height:6px;background:#d2d2d2"></div>
<svg style="left:28px;top:756px" width="12" height="15" viewBox="0 0 12 15"><path d="M6 1V4M3 7V4H9V7M2 10V7H5V10M7 10V7H10V10" stroke="#4a90d8" fill="none" stroke-width="1"/><rect x="4.8" y="0.5" width="2.4" height="2.4" fill="none" stroke="#4a90d8" stroke-width=".8"/><circle cx="2" cy="12" r="1.5" fill="none" stroke="#4a90d8"/><circle cx="6" cy="12" r="1.5" fill="none" stroke="#4a90d8"/><circle cx="10" cy="12" r="1.5" fill="none" stroke="#4a90d8"/></svg>
<div class="t" style="left:45px;top:757px;color:#2a2a2a;">Scene</div>
<svg style="left:86px;top:755px" width="16" height="16" viewBox="0 0 16 16"><circle cx="6" cy="6" r="5" fill="#a8c8f0" stroke="#777" stroke-width="1.3"/><path d="M10 10L14.5 14.5" stroke="#c8a020" stroke-width="3"/></svg>
<div class="t" style="left:105px;top:757px;color:#2a2a2a;">Search</div>
<svg style="left:151px;top:755px" width="13" height="15" viewBox="0 0 13 15"><rect x="0.5" y="0.5" width="12" height="14" fill="#fff" stroke="#222" stroke-width="1"/><rect x="2" y="2" width="5" height="5" fill="#2a5a9a"/><rect x="8.5" y="2" width="2" height="6" fill="#5a8ac8"/><path d="M3 11H10M3 11L5 9.5" stroke="#333" fill="none"/></svg>
<div class="t" style="left:169px;top:757px;color:#2a2a2a;">Properties</div>
<svg style="left:0px;top:0px" width="1916" height="1041" viewBox="0 0 1916 1041">
<defs>
<linearGradient id="bg" x1="0" y1="207" x2="0" y2="776" gradientUnits="userSpaceOnUse">
<stop offset="0" stop-color="#3a3d53"/><stop offset="0.5" stop-color="#6c6f7f"/><stop offset="1" stop-color="#a5a6ae"/></linearGradient>
<linearGradient id="cone" x1="0" y1="421" x2="0" y2="625" gradientUnits="userSpaceOnUse">
<stop offset="0" stop-color="#8a8a97"/><stop offset="0.25" stop-color="#94949f"/><stop offset="0.45" stop-color="#a6a6b0"/><stop offset="0.62" stop-color="#9a9aa5"/><stop offset="0.85" stop-color="#80808c"/><stop offset="1" stop-color="#868692"/></linearGradient>
<linearGradient id="cham" x1="0" y1="384" x2="0" y2="661" gradientUnits="userSpaceOnUse">
<stop offset="0" stop-color="#8c8c96"/><stop offset="0.5" stop-color="#8a8a94"/><stop offset="1" stop-color="#74747e"/></linearGradient>
<linearGradient id="boxf" x1="0" y1="384" x2="0" y2="661" gradientUnits="userSpaceOnUse">
<stop offset="0" stop-color="#a6a2aa"/><stop offset="0.5" stop-color="#aaa6ae"/><stop offset="1" stop-color="#a09ca4"/></linearGradient>
<linearGradient id="gl" x1="0" y1="223" x2="0" y2="776" gradientUnits="userSpaceOnUse"><stop offset="0" stop-color="#8a8892"/><stop offset="0.3" stop-color="#85828b"/><stop offset="0.55" stop-color="#7c7880"/><stop offset="1" stop-color="#6a666c"/></linearGradient>
<clipPath id="cm"><path d="M765 443L977.5 421.5L997.5 384.6H1301.4V661H997.5L977.5 624.4L765 603.5Z"/></clipPath>
</defs>
<rect x="336" y="207" width="1580" height="569" fill="url(#bg)"/>
<path d="M765 443L977.5 421.5V624.4L765 603.5Z" fill="url(#cone)"/>
<path d="M977.5 421.5L997.5 384.6V661L977.5 624.4Z" fill="url(#cham)"/>
<rect x="997.5" y="384.6" width="304" height="276.4" fill="url(#boxf)"/>
<path d="M765 443V603.5" stroke="#3c3c44" stroke-width="2"/>
<rect x="858.4" y="223.3" width="534.9" height="552.7" fill="#bc9283" fill-opacity="0.2"/>
<rect x="947" y="330" width="413" height="355" fill="#c094af" fill-opacity="0.2"/>
<path d="M858.5 223V776M881.5 223V776M903.5 223V776M925.5 223V776M948.5 223V776M970.5 223V776M992.5 223V776M1014.5 223V776M1037.5 223V776M1059.5 223V776M1081.5 223V776M1104.5 223V776M1126.5 223V776M1148.5 223V776M1170.5 223V776M1193.5 223V776M1215.5 223V776M1237.5 223V776M1260.5 223V776M1282.5 223V776M1304.5 223V776M1326.5 223V776M1349.5 223V776M1371.5 223V776M1393.5 223V776M858 223.5H1394M858 246.5H1394M858 268.5H1394M858 290.5H1394M858 313.5H1394M858 335.5H1394M858 357.5H1394M858 380.5H1394M858 402.5H1394M858 424.5H1394M858 447.5H1394M858 469.5H1394M858 491.5H1394M858 513.5H1394M858 536.5H1394M858 558.5H1394M858 580.5H1394M858 603.5H1394M858 625.5H1394M858 647.5H1394M858 670.5H1394M858 692.5H1394M858 714.5H1394M858 737.5H1394M858 759.5H1394" stroke="url(#gl)" stroke-width="1" fill="none"/>
<g clip-path="url(#cm)"><path d="M858.5 223V776M881.5 223V776M903.5 223V776M925.5 223V776M948.5 223V776M970.5 223V776M992.5 223V776M1014.5 223V776M1037.5 223V776M1059.5 223V776M1081.5 223V776M1104.5 223V776M1126.5 223V776M1148.5 223V776M1170.5 223V776M1193.5 223V776M1215.5 223V776M1237.5 223V776M1260.5 223V776M1282.5 223V776M1304.5 223V776M1326.5 223V776M1349.5 223V776M1371.5 223V776M1393.5 223V776M858 223.5H1394M858 246.5H1394M858 268.5H1394M858 290.5H1394M858 313.5H1394M858 335.5H1394M858 357.5H1394M858 380.5H1394M858 402.5H1394M858 424.5H1394M858 447.5H1394M858 469.5H1394M858 491.5H1394M858 513.5H1394M858 536.5H1394M858 558.5H1394M858 580.5H1394M858 603.5H1394M858 625.5H1394M858 647.5H1394M858 670.5H1394M858 692.5H1394M858 714.5H1394M858 737.5H1394M858 759.5H1394" stroke="#6c666c" stroke-width="1" fill="none"/></g>
<path d="M977.5 421.5V624.4" stroke="#6a5e64" stroke-width="1.6"/>
<path d="M997.5 384.6V661" stroke="#6a5e64" stroke-width="1.6"/>
<path d="M1301.4 384.6V661" stroke="#74646a" stroke-width="1.3"/>
<path d="M1393.3 213V223" stroke="#b0b0b8" stroke-width="1.2"/>
<path d="M997.5 456C997.5 405 1040 384 1085 384L1225 392C1275 396 1309 430 1309 468V585C1309 625 1275 654 1225 654L1085 662.6C1040 662.6 997.5 640 997.5 590Z" fill="none" stroke="#6e5e62" stroke-width="2"/>
</svg>
<svg style="left:0px;top:0px" width="1916" height="1041" viewBox="0 0 1916 1041">
<path d="M1125.5 208V776" stroke="#ff1010" stroke-width="1.4" stroke-dasharray="17 2 3 2"/>
<path d="M818 491H1434" stroke="#14f014" stroke-width="1.6" stroke-dasharray="18 3 7 3"/>
<path d="M946.5 330H1360V684.5H946.5Z" fill="none" stroke="#0a84fe" stroke-width="3.4"/>
<path d="M1091 401.5L1225 409.5C1261 411 1291 445 1291 482V564C1291 603 1261 633 1225 635L1091 644C1049 647 1015 612 1015 573.5V473C1015 434 1049 399 1091 401.5Z" fill="none" stroke="#0a84fe" stroke-width="3.4"/>
<path d="M1125.5 491H1103" stroke="#18e018" stroke-width="3.4"/>
<path d="M1096 491L1106 486V496Z" fill="#18e018"/>
<path d="M1085 485L1088 491L1091 485M1088 491V497" stroke="#30d030" stroke-width="1" fill="none" opacity=".7"/>
<path d="M1125.5 491V512" stroke="#ee1414" stroke-width="2.6"/>
<path d="M1121 511H1130L1125.5 519Z" fill="#ee1414"/>
<path d="M1125.5 519V524" stroke="#ee1414" stroke-width="1.2"/>
<path d="M1121.5 526L1129.5 537M1129.5 526L1121.5 537" stroke="#ee1414" stroke-width="1"/>
<path d="M1152.5 314V324" stroke="#0c0c8c" stroke-width="2.2"/><path d="M1152.5 690V700" stroke="#0c0c8c" stroke-width="2.2"/><path d="M958 336V346M952 346H964" stroke="#0c0c8c" stroke-width="1.8"/><path d="M1349 336V346M1343 346H1355" stroke="#0c0c8c" stroke-width="1.8"/><path d="M958 668V678M952 678H964" stroke="#0c0c8c" stroke-width="1.8"/><path d="M1349 668V678M1343 678H1355" stroke="#0c0c8c" stroke-width="1.8"/><path d="M929 506.5H941" stroke="#0c0c8c" stroke-width="2.2"/><path d="M1365.5 506.5H1377.5" stroke="#0c0c8c" stroke-width="2.2"/><path d="M996 522.5H1008" stroke="#0c0c8c" stroke-width="2.2"/><path d="M1297 522.5H1309" stroke="#0c0c8c" stroke-width="2.2"/><circle cx="1077" cy="405.5" r="3.2" fill="none" stroke="#1c1ca0" stroke-width="1.2"/><path d="M1076 412.5L1085 404.5" stroke="#1c1ca0" stroke-width="1.2"/><circle cx="1281.5" cy="469.5" r="3.2" fill="none" stroke="#1c1ca0" stroke-width="1.2"/><path d="M1280.5 476.5L1289.5 468.5" stroke="#1c1ca0" stroke-width="1.2"/><circle cx="1019.5" cy="581" r="3.2" fill="none" stroke="#1c1ca0" stroke-width="1.2"/><path d="M1018.5 588L1027.5 580" stroke="#1c1ca0" stroke-width="1.2"/><circle cx="1231.3" cy="624.5" r="3.2" fill="none" stroke="#1c1ca0" stroke-width="1.2"/><path d="M1230.3 631.5L1239.3 623.5" stroke="#1c1ca0" stroke-width="1.2"/>
<circle cx="946.5" cy="330" r="3" fill="#fff" stroke="#000" stroke-width="1.6"/><circle cx="1360" cy="330" r="3" fill="#fff" stroke="#000" stroke-width="1.6"/><circle cx="946.5" cy="684.5" r="3" fill="#fff" stroke="#000" stroke-width="1.6"/><circle cx="1360" cy="684.5" r="3" fill="#fff" stroke="#000" stroke-width="1.6"/><circle cx="1091" cy="401.5" r="3" fill="#fff" stroke="#000" stroke-width="1.6"/><circle cx="1225" cy="409.5" r="3" fill="#fff" stroke="#000" stroke-width="1.6"/><circle cx="1291" cy="482" r="3" fill="#fff" stroke="#000" stroke-width="1.6"/><circle cx="1291" cy="564" r="3" fill="#fff" stroke="#000" stroke-width="1.6"/><circle cx="1225" cy="635" r="3" fill="#fff" stroke="#000" stroke-width="1.6"/><circle cx="1091" cy="644" r="3" fill="#fff" stroke="#000" stroke-width="1.6"/><circle cx="1015" cy="573.5" r="3" fill="#fff" stroke="#000" stroke-width="1.6"/><circle cx="1015" cy="473" r="3" fill="#fff" stroke="#000" stroke-width="1.6"/>
<path d="M372.5 741V722" stroke="#10b010" stroke-width="2.4"/><path d="M368.5 726L372.5 717L376.5 726Z" fill="#10a010"/>
<path d="M372 739.5H389" stroke="#e05050" stroke-width="2"/><path d="M387 736L395 739.5L387 743Z" fill="#d01010"/>
<circle cx="372.5" cy="739.5" r="2.5" fill="#7070e0"/>
<text x="371" y="712" font-size="9" fill="#20c020" font-family="Liberation Sans">Y</text>
<text x="398" y="743" font-size="10" fill="#e02020" font-family="Liberation Sans">X</text>
<text x="362" y="743" font-size="10" fill="#2020e0" font-family="Liberation Sans">Z</text>
</svg>
<div class="t" style="left:27px;top:787px;color:#3c3c3c;">Catalog Browser</div>
<svg style="left:1862px;top:791px" width="11" height="6" viewBox="0 0 11 6"><path d="M0 0H11L5.5 6Z" fill="#6a6a6a"/></svg>
<svg style="left:1882px;top:788px" width="9" height="12" viewBox="0 0 9 12"><path d="M2 0.5H7M3 0.5V6M6 0.5V6M1 6.5H8M4.5 6.5V11.5" stroke="#6a6a6a" stroke-width="1.2" fill="none"/></svg>
<svg style="left:1900px;top:789px" width="9" height="9" viewBox="0 0 9 9"><path d="M0.5 0.5L8.5 8.5M8.5 0.5L0.5 8.5" stroke="#6a6a6a" stroke-width="1.3"/></svg>
<div class="a" style="left:23px;top:808px;width:471px;height:18px;background:#e1e1e1;border:1px solid #adadad"></div>
<svg style="left:30px;top:810px" width="14" height="14" viewBox="0 0 14 14"><rect x="1" y="1" width="10" height="12" fill="#fff" stroke="#333" stroke-width="1"/><path d="M11 2V8" stroke="#333" stroke-width="1.4"/><rect x="3.5" y="4" width="2" height="2" fill="#333"/><rect x="6.5" y="4" width="2" height="2" fill="#333"/><rect x="3.5" y="8" width="2" height="2" fill="#333"/><rect x="6.5" y="8" width="2" height="2" fill="#333"/></svg>
<div class="t" style="left:168px;width:200px;text-align:center;top:810px;color:#1a1a1a;">New</div>
<div class="a" style="left:496px;top:808px;width:471px;height:18px;background:#e1e1e1;border:1px solid #adadad"></div>
<svg style="left:503px;top:810px" width="14" height="14" viewBox="0 0 14 14"><rect x="1" y="1" width="10" height="12" fill="#fff" stroke="#333" stroke-width="1"/><path d="M11 2V8" stroke="#333" stroke-width="1.4"/><rect x="3.5" y="4" width="2" height="2" fill="#333"/><rect x="6.5" y="4" width="2" height="2" fill="#333"/><rect x="3.5" y="8" width="2" height="2" fill="#333"/><rect x="6.5" y="8" width="2" height="2" fill="#333"/></svg>
<div class="t" style="left:641px;width:200px;text-align:center;top:810px;color:#1a1a1a;">Open</div>
<div class="a" style="left:969px;top:808px;width:471px;height:18px;background:#e1e1e1;border:1px solid #adadad"></div>
<svg style="left:976px;top:810px" width="14" height="14" viewBox="0 0 14 14"><rect x="1" y="1" width="10" height="12" fill="#fff" stroke="#333" stroke-width="1"/><path d="M11 2V8" stroke="#333" stroke-width="1.4"/><rect x="3.5" y="4" width="2" height="2" fill="#333"/><rect x="6.5" y="4" width="2" height="2" fill="#333"/><rect x="3.5" y="8" width="2" height="2" fill="#333"/><rect x="6.5" y="8" width="2" height="2" fill="#333"/></svg>
<div class="t" style="left:1114px;width:200px;text-align:center;top:810px;color:#1a1a1a;">Save</div>
<div class="a" style="left:1442px;top:808px;width:471px;height:18px;background:#e1e1e1;border:1px solid #adadad"></div>
<svg style="left:1449px;top:810px" width="14" height="14" viewBox="0 0 14 14"><rect x="1" y="1" width="10" height="12" fill="#fff" stroke="#333" stroke-width="1"/><path d="M11 2V8" stroke="#333" stroke-width="1.4"/><rect x="3.5" y="4" width="2" height="2" fill="#333"/><rect x="6.5" y="4" width="2" height="2" fill="#333"/><rect x="3.5" y="8" width="2" height="2" fill="#333"/><rect x="6.5" y="8" width="2" height="2" fill="#333"/></svg>
<div class="t" style="left:1587px;width:200px;text-align:center;top:810px;color:#1a1a1a;">Close</div>
<div class="a" style="left:1912px;top:808px;width:4px;height:18px;background:#222"></div>
<div class="a" style="left:22px;top:826px;width:1894px;height:21px;background:#fff"></div>
<div class="a" style="left:23px;top:827px;width:17px;height:19px;background:#e6e6e6;border:1px solid #cfcfcf"></div>
<svg style="left:25px;top:830px" width="14" height="12" viewBox="0 0 14 12"><path d="M1 6L7 1V4H13V8H7V11Z" fill="#b8b8b8"/></svg>
<div class="t" style="left:45px;top:828px;color:#3a3a3a;">Search ...</div>
<div class="a" style="left:1896px;top:828px;width:18px;height:18px;background:#f4f0e8;border:1px solid #c8c8c8"></div>
<svg style="left:1898px;top:830px" width="14" height="14" viewBox="0 0 14 14"><path d="M2 2L12 12M12 2L2 12" stroke="#e01020" stroke-width="1.8"/></svg>
<div class="a" style="left:22px;top:847px;width:1894px;height:146px;background:#fff;border:1px solid #a0a0a8;border-right:none"></div>
<svg style="left:44px;top:851px" width="32" height="31" viewBox="0 0 32 31"><path d="M4 6L14 2L27 4L27 22L16 28L4 24Z" fill="#bfd2ce"/><path d="M4 6L14 2L27 4L16 8Z" fill="#dde9e6"/><path d="M16 8L27 4V22L16 28Z" fill="#97aca8"/></svg>
<div class="t" style="left:-40px;width:200px;text-align:center;top:887px;color:#1a1a1a;">Block</div>
<svg style="left:120px;top:851px" width="32" height="31" viewBox="0 0 32 31"><path d="M16 22L30 14L28 26L18 30Z" fill="#e0e4e4"/><path d="M0 13L17 1L33 11L16 24Z" fill="#24248c"/><path d="M5.5 13L17 5.5L27.5 11.5L16 19.5Z" fill="#eef0f4"/><path d="M11 13L17 9L22 12L16 16Z" fill="#c0c6d4"/></svg>
<div class="t" style="left:36px;width:200px;text-align:center;top:887px;color:#1a1a1a;">H Block</div>
<svg style="left:195px;top:851px" width="32" height="31" viewBox="0 0 32 31"><path d="M1 5L11 1L32 24L22 28Z" fill="#dde9e6"/><path d="M22 28L32 24V26.5L22.5 30.5Z" fill="#97aca8"/><path d="M1 5L22 28V30.5L1 7Z" fill="#bfd2ce"/></svg>
<div class="t" style="left:111px;width:200px;text-align:center;top:887px;color:#1a1a1a;">Slab</div>
<svg style="left:270px;top:851px" width="32" height="31" viewBox="0 0 32 31"><path d="M0 13L18 1L33 13L15 28Z" fill="#24248c"/><path d="M5 13.5L18 5L28 13L15.5 23Z" fill="#eceef4"/><path d="M10 14L18 9L23 13L15.5 18.5Z" fill="#d0d4de"/></svg>
<div class="t" style="left:186px;width:200px;text-align:center;top:887px;color:#1a1a1a;">H Slab</div>
<svg style="left:345px;top:851px" width="32" height="31" viewBox="0 0 32 31"><path d="M5 6C5 2 20 1 26 4C30 6 28 10 26 10V26C20 29 8 29 5 26Z" fill="#bfd2ce"/><path d="M5 6C5 2 20 1 26 4C30 6 27 10 22 10C14 10 5 9 5 6Z" fill="#dde9e6"/><path d="M22 10C26 10 28 8 28 7V24C28 27 24 28 22 28Z" fill="#97aca8"/></svg>
<div class="t" style="left:261px;width:200px;text-align:center;top:887px;color:#1a1a1a;">Slot</div>
<svg style="left:420px;top:851px" width="32" height="31" viewBox="0 0 32 31"><path d="M1 10L24 3L32 16L10 25Z" fill="#24248c"/><ellipse cx="16" cy="14" rx="9" ry="5" transform="rotate(35 16 14)" fill="#eef0f4"/><path d="M12 26L22 22L20 28Z" fill="#d8dcdc"/></svg>
<div class="t" style="left:336px;width:200px;text-align:center;top:887px;color:#1a1a1a;">H Slot</div>
<svg style="left:495px;top:851px" width="32" height="31" viewBox="0 0 32 31"><path d="M4 6V24C4 29 26 29 26 24V6Z" fill="#bfd2ce"/><ellipse cx="15" cy="6" rx="11" ry="4" fill="#dde9e6"/><path d="M19 9C24 8 26 7 26 6V24C26 27 22 28 19 28Z" fill="#97aca8" opacity=".6"/></svg>
<div class="t" style="left:411px;width:200px;text-align:center;top:887px;color:#1a1a1a;">Cylinder</div>
<svg style="left:570px;top:851px" width="32" height="31" viewBox="0 0 32 31"><path d="M1 13L17 2L32 13L16 25Z" fill="#24248c"/><ellipse cx="16" cy="13" rx="8" ry="5.5" fill="#f0f2f4"/><ellipse cx="16" cy="11" rx="6" ry="3.5" fill="#c4c8d0"/><path d="M10 24L22 24L16 28Z" fill="#e4e8e8"/></svg>
<div class="t" style="left:486px;width:200px;text-align:center;top:887px;color:#1a1a1a;">H Cylinder</div>
<svg style="left:645px;top:851px" width="32" height="31" viewBox="0 0 32 31"><path d="M2 10V24C4 29 22 29 24 24L30 8Z" fill="#bfd2ce"/><ellipse cx="16" cy="8" rx="14" ry="6" transform="rotate(-15 16 8)" fill="#dde9e6"/><path d="M24 24L30 8V12C30 18 28 22 24 27Z" fill="#97aca8" opacity=".6"/></svg>
<div class="t" style="left:561px;width:200px;text-align:center;top:887px;color:#1a1a1a;">Ellipse</div>
<svg style="left:720px;top:851px" width="32" height="31" viewBox="0 0 32 31"><path d="M1 12L17 2L32 12L16 24Z" fill="#24248c"/><ellipse cx="16" cy="12" rx="9" ry="6" fill="#eef0f4"/><ellipse cx="16" cy="10" rx="6" ry="3" fill="#c0c4cc"/><path d="M10 23L22 23L16 28Z" fill="#e4e8e8"/></svg>
<div class="t" style="left:636px;width:200px;text-align:center;top:887px;color:#1a1a1a;">H Ellipse</div>
<svg style="left:795px;top:851px" width="32" height="31" viewBox="0 0 32 31"><path d="M2 10L18 2L31 12L22 26L10 28Z" fill="#bfd2ce"/><path d="M2 10L18 2L31 12L15 15Z" fill="#dde9e6"/><path d="M15 15L31 12L22 26L10 28Z" fill="#97aca8"/></svg>
<div class="t" style="left:711px;width:200px;text-align:center;top:887px;color:#1a1a1a;">Poly</div>
<svg style="left:870px;top:851px" width="32" height="31" viewBox="0 0 32 31"><path d="M2 24L10 3L32 3L24 25Z" fill="#24248c"/><path d="M9 18L12 6L25 6L22 19Z" fill="#eceef4"/><path d="M13 17L15 8L22 8L20 17Z" fill="#c8ccd8"/><path d="M22 18L30 15L28 26L22 28Z" fill="#dcdcdc" opacity=".7"/></svg>
<div class="t" style="left:786px;width:200px;text-align:center;top:887px;color:#1a1a1a;">H Poly</div>
<svg style="left:945px;top:851px" width="32" height="31" viewBox="0 0 32 31"><circle cx="16" cy="15" r="14" fill="#a8c4c0"/><circle cx="14" cy="13" r="10" fill="#cfe2de"/><path d="M8 14C10 8 18 6 22 12" stroke="#eef8f6" stroke-width="3" fill="none"/></svg>
<div class="t" style="left:861px;width:200px;text-align:center;top:887px;color:#1a1a1a;">Sphere</div>
<svg style="left:1020px;top:851px" width="32" height="31" viewBox="0 0 32 31"><path d="M1 16L20 2L32 3L20 26Z" fill="#24248c"/><path d="M9 14C12 4 26 2 30 8C33 14 28 26 20 26C14 26 10 20 9 14Z" fill="#dfe2ec"/><path d="M13 12C15 6 24 5 27 9" stroke="#f4f6fa" stroke-width="2.5" fill="none"/></svg>
<div class="t" style="left:936px;width:200px;text-align:center;top:887px;color:#1a1a1a;">H Sphere</div>
<svg style="left:1095px;top:851px" width="32" height="31" viewBox="0 0 32 31"><path d="M4 1L28 7L26 24L15 29Z" fill="#bfd2ce"/><path d="M4 1L28 7L15 12Z" fill="#dde9e6"/><path d="M15 12L28 7L26 24L15 29Z" fill="#97aca8"/></svg>
<div class="t" style="left:1011px;width:200px;text-align:center;top:887px;color:#1a1a1a;">Pie</div>
<svg style="left:1170px;top:851px" width="32" height="31" viewBox="0 0 32 31"><path d="M4 2L24 8L22 29L4 22Z" fill="#24248c"/><path d="M8 12C8 6 18 6 18 14C18 20 8 20 8 14L13 14Z" fill="#e4e6f0"/><path d="M24 8C30 8 30 20 24 20Z" fill="#dcdcdc"/></svg>
<div class="t" style="left:1086px;width:200px;text-align:center;top:887px;color:#1a1a1a;">H Pie</div>
<svg style="left:1245px;top:851px" width="32" height="31" viewBox="0 0 32 31"><circle cx="16" cy="15" r="13" fill="#8fb0ac"/><circle cx="16" cy="15" r="11" fill="#c6dcd8"/><circle cx="16" cy="15" r="7" fill="#fff" stroke="#7a9894" stroke-width="1.5"/></svg>
<div class="t" style="left:1161px;width:200px;text-align:center;top:887px;color:#1a1a1a;">Torus</div>
<svg style="left:1320px;top:851px" width="32" height="31" viewBox="0 0 32 31"><path d="M4 2L30 6L26 28L1 24Z" fill="#24248c"/><ellipse cx="16" cy="15" rx="10" ry="8" fill="#dfe3ee"/><ellipse cx="16" cy="14" rx="4.5" ry="3.5" fill="#24248c"/></svg>
<div class="t" style="left:1236px;width:200px;text-align:center;top:887px;color:#1a1a1a;">H Torus</div>
<svg style="left:1395px;top:851px" width="32" height="31" viewBox="0 0 32 31"><path d="M2 24L31 2L14 29C8 30 3 28 2 24Z" fill="#bfd2ce"/><path d="M2 24L31 2L10 20Z" fill="#dde9e6"/><path d="M14 29L31 2L22 26Z" fill="#97aca8" opacity=".5"/></svg>
<div class="t" style="left:1311px;width:200px;text-align:center;top:887px;color:#1a1a1a;">Cone</div>
<svg style="left:1470px;top:851px" width="32" height="31" viewBox="0 0 32 31"><path d="M1 25L14 3L24 3L8 28Z" fill="#24248c"/><path d="M8 26L24 3L29 24C22 27 14 28 8 26Z" fill="#d4d8e6"/><path d="M24 3L29 24L22 25Z" fill="#a8b0c8"/></svg>
<div class="t" style="left:1386px;width:200px;text-align:center;top:887px;color:#1a1a1a;">H Cone</div>
<svg style="left:1546px;top:851px" width="32" height="31" viewBox="0 0 32 31"><path d="M16 1L1 29H30Z" fill="#bfd2ce"/><path d="M16 1L1 29H12Z" fill="#dde9e6"/><path d="M16 1L30 29H20Z" fill="#97aca8" opacity=".5"/></svg>
<div class="t" style="left:1462px;width:200px;text-align:center;top:887px;color:#1a1a1a;">Pyramid</div>
<svg style="left:1621px;top:851px" width="32" height="31" viewBox="0 0 32 31"><path d="M1 25L15 3L24 3L9 28Z" fill="#24248c"/><path d="M10 24L24 3L29 24Z" fill="#d4d8e6"/><path d="M24 3L29 24L22 24Z" fill="#a8b0c8"/></svg>
<div class="t" style="left:1537px;width:200px;text-align:center;top:887px;color:#1a1a1a;">H Pyramid</div>
<svg style="left:1696px;top:851px" width="32" height="31" viewBox="0 0 32 31"><path d="M6 6C12 0 26 1 29 8C32 16 26 28 18 28C10 28 3 18 6 6Z" fill="#bfd2ce"/><path d="M6 6C12 0 26 1 29 8L16 14Z" fill="#dde9e6"/><path d="M16 14L29 8C30 16 26 26 18 28Z" fill="#97aca8" opacity=".5"/></svg>
<div class="t" style="left:1612px;width:200px;text-align:center;top:887px;color:#1a1a1a;">Part Cone</div>
<svg style="left:1771px;top:851px" width="32" height="31" viewBox="0 0 32 31"><path d="M1 25L14 3L24 3L8 28Z" fill="#24248c"/><path d="M8 26C10 16 16 6 24 3C30 8 30 16 26 22C20 26 14 26 8 26Z" fill="#d4d8e6"/><path d="M20 18L28 22L24 26Z" fill="#ffffff"/></svg>
<div class="t" style="left:1687px;width:200px;text-align:center;top:887px;color:#1a1a1a;">H Part Cone</div>
<svg style="left:44px;top:926px" width="32" height="31" viewBox="0 0 32 31"><path d="M3 8L14 2L31 4L21 26L4 20Z" fill="#bfd2ce"/><path d="M3 8L14 2L31 4L20 9Z" fill="#dde9e6"/><path d="M20 9L31 4L21 26Z" fill="#97aca8"/><path d="M3 8L20 9L21 26L4 20Z" fill="#e4f0ee"/></svg>
<div class="t" style="left:-40px;width:200px;text-align:center;top:962px;color:#1a1a1a;">Bar</div>
<svg style="left:120px;top:926px" width="32" height="31" viewBox="0 0 32 31"><path d="M2 1L30 24L24 30L3 24Z" fill="#bfd2ce"/><path d="M2 1L30 24L26 28Z" fill="#dde9e6"/><path d="M2 1L3 24L24 30Z" fill="#97aca8" opacity=".8"/></svg>
<div class="t" style="left:36px;width:200px;text-align:center;top:962px;color:#1a1a1a;">Rib</div>
<svg style="left:195px;top:926px" width="32" height="31" viewBox="0 0 32 31"><ellipse cx="19" cy="8" rx="13" ry="7" transform="rotate(20 19 8)" fill="#bfd2ce"/><ellipse cx="18" cy="7" rx="10" ry="5" transform="rotate(20 18 7)" fill="#dde9e6"/><path d="M14 14L8 24C8 30 20 30 20 26L18 14Z" fill="#b4ccc8"/><path d="M11 22L15 16M16 24L18 16" stroke="#fff" stroke-width="1.2"/></svg>
<div class="t" style="left:111px;width:200px;text-align:center;top:962px;color:#1a1a1a;">L3 Circles</div>
<svg style="left:270px;top:926px" width="32" height="31" viewBox="0 0 32 31"><path d="M12 2L28 8L26 16L10 12Z" fill="#dde9e6"/><path d="M4 18C10 12 20 14 26 16L22 28C16 30 10 28 6 26Z" fill="#b8d0cc"/><path d="M8 20C12 16 18 18 22 20" stroke="#e8f4f2" stroke-width="2" fill="none"/></svg>
<div class="t" style="left:186px;width:200px;text-align:center;top:962px;color:#1a1a1a;">Twist</div>
<svg style="left:345px;top:926px" width="32" height="31" viewBox="0 0 32 31"><path d="M6 26L24 2L30 3L26 28Z" fill="#bfd2ce"/><path d="M6 26L24 2L26 28Z" fill="#dde9e6"/><path d="M12 27L14 18" stroke="#2030e0" stroke-width="1.2"/><path d="M6 27L12 27" stroke="#e02020" stroke-width="1.2"/></svg>
<div class="t" style="left:261px;width:200px;text-align:center;top:962px;color:#1a1a1a;">Slab2</div>
<svg style="left:420px;top:926px" width="32" height="31" viewBox="0 0 32 31"><path d="M4 10C4 2 20 0 28 4L30 8C32 18 26 28 16 28C8 28 3 20 4 10Z" fill="#bfd2ce"/><ellipse cx="13" cy="10" rx="9" ry="7" fill="#cde0dc"/><path d="M16 16L18 28" stroke="#2030e0" stroke-width="1.2"/><path d="M18 28L22 26" stroke="#e02020" stroke-width="1.2"/></svg>
<div class="t" style="left:336px;width:200px;text-align:center;top:962px;color:#1a1a1a;">Cylinder2</div>
<svg style="left:495px;top:926px" width="32" height="31" viewBox="0 0 32 31"><circle cx="16" cy="15" r="14" fill="#a4c0bc"/><circle cx="15" cy="13" r="10" fill="#cfe2de"/><path d="M9 13C11 8 18 7 21 12" stroke="#eef8f6" stroke-width="3" fill="none"/><path d="M10 28H18" stroke="#e02020" stroke-width="1.5"/></svg>
<div class="t" style="left:411px;width:200px;text-align:center;top:962px;color:#1a1a1a;">Sphere2</div>
<svg style="left:570px;top:926px" width="32" height="31" viewBox="0 0 32 31"><path d="M6 3C18 0 30 10 26 28L20 28C24 14 16 8 8 9Z" fill="#bfd2ce"/><path d="M6 3C18 0 28 10 24 26L22 26C24 14 16 6 8 7Z" fill="#e8f2f0"/></svg>
<div class="t" style="left:486px;width:200px;text-align:center;top:962px;color:#1a1a1a;">Partial Torus</div>
<svg style="left:645px;top:926px" width="32" height="31" viewBox="0 0 32 31"><ellipse cx="16" cy="15" rx="15" ry="11" transform="rotate(-25 16 15)" fill="#a8c4c0"/><ellipse cx="14" cy="13" rx="10" ry="6" transform="rotate(-25 14 13)" fill="#cfe2de"/></svg>
<div class="t" style="left:561px;width:200px;text-align:center;top:962px;color:#1a1a1a;">Ellipsoid</div>
<svg style="left:720px;top:926px" width="32" height="31" viewBox="0 0 32 31"><path d="M1 28L12 4L32 2L26 28Z" fill="#24248c"/><path d="M10 24C12 12 22 4 30 5C32 16 26 26 14 26Z" fill="#d8dcf0"/><path d="M16 20C18 12 24 8 28 9" stroke="#f0f2fa" stroke-width="2.5" fill="none"/></svg>
<div class="t" style="left:636px;width:200px;text-align:center;top:962px;color:#1a1a1a;">H Ellipsoid</div>
<div class="a" style="left:22px;top:993px;width:1894px;height:23px;background:#e6e6e6"></div>
<div class="a" style="left:69px;top:993px;width:49px;height:22px;background:#fff;border:1px solid #cfcfcf;border-top:none"></div>
<div class="t" style="left:28px;top:997px;color:#3a3a3a;letter-spacing:-0.2px">Starter</div>
<div class="t" style="left:74px;top:997px;color:#3a3a3a;letter-spacing:-0.2px">Shapes</div>
<div class="t" style="left:125px;top:997px;color:#3a3a3a;letter-spacing:-0.2px">Advshaps</div>
<div class="t" style="left:189px;top:997px;color:#3a3a3a;letter-spacing:-0.2px">FlexShapes</div>
<div class="t" style="left:260px;top:997px;color:#3a3a3a;letter-spacing:-0.2px">SheetMtl</div>
<div class="t" style="left:320px;top:997px;color:#3a3a3a;letter-spacing:-0.2px">Tools</div>
<div class="t" style="left:361px;top:997px;color:#3a3a3a;letter-spacing:-0.2px">Materials</div>
<div class="t" style="left:422px;top:997px;color:#3a3a3a;letter-spacing:-0.2px">Animatn</div>
<div class="t" style="left:481px;top:997px;color:#3a3a3a;letter-spacing:-0.2px">Surfaces</div>
<div class="t" style="left:538px;top:997px;color:#3a3a3a;letter-spacing:-0.2px">Textures</div>
<div class="t" style="left:595px;top:997px;color:#3a3a3a;letter-spacing:-0.2px">Bumps</div>
<div class="t" style="left:645px;top:997px;color:#3a3a3a;letter-spacing:-0.2px">Colors</div>
<div class="t" style="left:692px;top:997px;color:#3a3a3a;letter-spacing:-0.2px">Steel Frames</div>
<div class="t" style="left:771px;top:997px;color:#3a3a3a;letter-spacing:-0.2px">Tank</div>
<div class="t" style="left:809px;top:997px;color:#3a3a3a;letter-spacing:-0.2px">inovate test</div>
<svg style="left:1901px;top:1002px" width="10" height="5" viewBox="0 0 10 5"><path d="M0 0H10L5 5Z" fill="#555"/></svg>
<div class="a" style="left:3px;top:373px;width:2px;height:2px;background:#a0a0a0"></div>
<div class="a" style="left:7px;top:373px;width:2px;height:2px;background:#a0a0a0"></div>
<div class="a" style="left:11px;top:373px;width:2px;height:2px;background:#a0a0a0"></div>
<div class="a" style="left:15px;top:373px;width:2px;height:2px;background:#a0a0a0"></div>
<svg style="left:2px;top:380px" width="16" height="16" viewBox="0 0 16 16"><rect x="5" y="1" width="10" height="10" fill="#c8c8c8" stroke="#9a9a9a"/><rect x="1" y="5" width="10" height="10" fill="#b4b4b4" stroke="#9a9a9a" opacity=".9"/></svg>
<svg style="left:2px;top:405px" width="16" height="16" viewBox="0 0 16 16"><rect x="5" y="1" width="10" height="10" fill="#c8c8c8" stroke="#9a9a9a"/><rect x="1" y="5" width="10" height="10" fill="#b4b4b4" stroke="#9a9a9a" opacity=".9"/></svg>
<svg style="left:2px;top:435px" width="16" height="16" viewBox="0 0 16 16"><rect x="5" y="1" width="10" height="10" fill="#c8c8c8" stroke="#9a9a9a"/><rect x="1" y="5" width="10" height="10" fill="#b4b4b4" stroke="#9a9a9a" opacity=".9"/></svg>
<svg style="left:2px;top:457px" width="16" height="16" viewBox="0 0 16 16"><rect x="5" y="1" width="10" height="10" fill="#c8c8c8" stroke="#9a9a9a"/><rect x="1" y="5" width="10" height="10" fill="#b4b4b4" stroke="#9a9a9a" opacity=".9"/></svg>
<svg style="left:2px;top:479px" width="16" height="16" viewBox="0 0 16 16"><rect x="5" y="1" width="10" height="10" fill="#c8c8c8" stroke="#9a9a9a"/><rect x="1" y="5" width="10" height="10" fill="#b4b4b4" stroke="#9a9a9a" opacity=".9"/></svg>
<div class="a" style="left:2px;top:427px;width:18px;height:1px;background:#d0d0d0"></div>
<svg style="left:8px;top:500px" width="5" height="7" viewBox="0 0 5 7"><path d="M4.5 0V7L0.5 3.5Z" fill="#666"/></svg>
<div class="a" style="left:3px;top:515px;width:2px;height:2px;background:#a0a0a0"></div>
<div class="a" style="left:7px;top:515px;width:2px;height:2px;background:#a0a0a0"></div>
<div class="a" style="left:11px;top:515px;width:2px;height:2px;background:#a0a0a0"></div>
<div class="a" style="left:15px;top:515px;width:2px;height:2px;background:#a0a0a0"></div>
<svg style="left:1px;top:524px" width="17" height="17" viewBox="0 0 17 17"><path d="M1 5H12V16H1Z" fill="#2e5ea6" stroke="#2e5ea6" stroke-width="1"/><path d="M1 5L5 1H16L12 5Z" fill="#b8d0ee" stroke="#2e5ea6" stroke-width="1"/><path d="M12 5L16 1V12L12 16Z" fill="#b8d0ee" stroke="#2e5ea6" stroke-width="1"/></svg>
<svg style="left:1px;top:546px" width="17" height="17" viewBox="0 0 17 17"><path d="M1 5H12V16H1Z" fill="#b8d0ee" stroke="#2e5ea6" stroke-width="1"/><path d="M1 5L5 1H16L12 5Z" fill="#2e5ea6" stroke="#2e5ea6" stroke-width="1"/><path d="M12 5L16 1V12L12 16Z" fill="#b8d0ee" stroke="#2e5ea6" stroke-width="1"/></svg>
<svg style="left:1px;top:568px" width="17" height="17" viewBox="0 0 17 17"><path d="M1 5H12V16H1Z" fill="#b8d0ee" stroke="#2e5ea6" stroke-width="1"/><path d="M1 5L5 1H16L12 5Z" fill="#b8d0ee" stroke="#2e5ea6" stroke-width="1"/><path d="M12 5L16 1V12L12 16Z" fill="#2e5ea6" stroke="#2e5ea6" stroke-width="1"/></svg>
<svg style="left:1px;top:590px" width="17" height="17" viewBox="0 0 17 17"><path d="M1 5H12V16H1Z" fill="#f4f8fc" stroke="#2e5ea6" stroke-width="1"/><path d="M1 5L5 1H16L12 5Z" fill="#b8d0ee" stroke="#2e5ea6" stroke-width="1"/><path d="M12 5L16 1V12L12 16Z" fill="#2e5ea6" stroke="#2e5ea6" stroke-width="1"/></svg>
<svg style="left:1px;top:611px" width="17" height="17" viewBox="0 0 17 17"><path d="M1 5H12V16H1Z" fill="#b8d0ee" stroke="#2e5ea6" stroke-width="1"/><path d="M1 5L5 1H16L12 5Z" fill="#f4f8fc" stroke="#2e5ea6" stroke-width="1"/><path d="M12 5L16 1V12L12 16Z" fill="#2e5ea6" stroke="#2e5ea6" stroke-width="1"/></svg>
<svg style="left:1px;top:634px" width="17" height="17" viewBox="0 0 17 17"><path d="M1 5H12V16H1Z" fill="#b8d0ee" stroke="#2e5ea6" stroke-width="1"/><path d="M1 5L5 1H16L12 5Z" fill="#2e5ea6" stroke="#2e5ea6" stroke-width="1"/><path d="M12 5L16 1V12L12 16Z" fill="#f4f8fc" stroke="#2e5ea6" stroke-width="1"/></svg>
<svg style="left:1px;top:656px" width="17" height="17" viewBox="0 0 17 17"><path d="M4 5H14V16H4Z" fill="#2e5ea6" stroke="#1e3e76" stroke-width="1"/><path d="M1 3L4 0.5H11L14 5H4Z" fill="#4a7ec6" stroke="#1e3e76" stroke-width="1"/><path d="M1 3L4 5V16L1 13Z" fill="#3a6eb6" stroke="#1e3e76" stroke-width="1"/></svg>
<svg style="left:1px;top:679px" width="17" height="17" viewBox="0 0 17 17"><path d="M4 5H14V16H4Z" fill="#2e5ea6" stroke="#1e3e76" stroke-width="1"/><path d="M1 3L4 0.5H11L14 5H4Z" fill="#f4f8fc" stroke="#1e3e76" stroke-width="1"/><path d="M1 3L4 5V16L1 13Z" fill="#f4f8fc" stroke="#1e3e76" stroke-width="1"/></svg>
<svg style="left:1px;top:701px" width="17" height="17" viewBox="0 0 17 17"><path d="M4 5H14V16H4Z" fill="#2e5ea6" stroke="#1e3e76" stroke-width="1"/><path d="M1 3L4 0.5H11L14 5H4Z" fill="#f4f8fc" stroke="#1e3e76" stroke-width="1"/><path d="M1 3L4 5V16L1 13Z" fill="#3a6eb6" stroke="#1e3e76" stroke-width="1"/></svg>
<svg style="left:1px;top:723px" width="17" height="17" viewBox="0 0 17 17"><path d="M4 5H14V16H4Z" fill="#2e5ea6" stroke="#1e3e76" stroke-width="1"/><path d="M1 3L4 0.5H11L14 5H4Z" fill="#f4f8fc" stroke="#1e3e76" stroke-width="1"/><path d="M1 3L4 5V16L1 13Z" fill="#f4f8fc" stroke="#1e3e76" stroke-width="1"/></svg>
<svg style="left:8px;top:741px" width="5" height="7" viewBox="0 0 5 7"><path d="M4.5 0V7L0.5 3.5Z" fill="#666"/></svg>
<div class="a" style="left:3px;top:757px;width:2px;height:2px;background:#a0a0a0"></div>
<div class="a" style="left:7px;top:757px;width:2px;height:2px;background:#a0a0a0"></div>
<div class="a" style="left:11px;top:757px;width:2px;height:2px;background:#a0a0a0"></div>
<div class="a" style="left:15px;top:757px;width:2px;height:2px;background:#a0a0a0"></div>
<svg style="left:1px;top:766px" width="18" height="18" viewBox="0 0 18 18"><path d="M3 3L15 15M1 5L5 1M13 17L17 13" stroke="#9a9a9a" stroke-width="1"/></svg>
<svg style="left:1px;top:788px" width="18" height="18" viewBox="0 0 18 18"><path d="M1 2H17M1 2V7M17 2V7" stroke="#9a9a9a"/><ellipse cx="9" cy="11" rx="6" ry="4" fill="none" stroke="#9a9a9a" stroke-width="1.2"/><path d="M5 11H13" stroke="#9a9a9a"/></svg>
<svg style="left:1px;top:810px" width="18" height="18" viewBox="0 0 18 18"><path d="M2 1V17" stroke="#9a9a9a"/><ellipse cx="11" cy="9" rx="6" ry="4" fill="none" stroke="#9a9a9a" stroke-width="1.2"/><path d="M7 9H15" stroke="#9a9a9a"/></svg>
<svg style="left:1px;top:832px" width="18" height="18" viewBox="0 0 18 18"><path d="M1 16H17M1 16L9 3L15 10" stroke="#9a9a9a" fill="none"/></svg>
<svg style="left:1px;top:853px" width="18" height="18" viewBox="0 0 18 18"><circle cx="9" cy="9" r="7.5" fill="none" stroke="#9a9a9a" stroke-width="1.2"/><path d="M5 5L11 11M5 5V8M5 5H8" stroke="#9a9a9a"/></svg>
<svg style="left:1px;top:875px" width="18" height="18" viewBox="0 0 18 18"><circle cx="9" cy="9" r="7.5" fill="none" stroke="#9a9a9a" stroke-width="1.2"/><path d="M4 4L14 14" stroke="#9a9a9a"/></svg>
<div class="a" style="left:2px;top:901px;width:18px;height:1px;background:#d0d0d0"></div>
<svg style="left:1px;top:906px" width="18" height="16" viewBox="0 0 18 16"><path d="M2 15C2 8 6 6 10 6" stroke="#9a9a9a" fill="none"/><text x="10" y="8" font-size="8" fill="#9a9a9a" font-family="Liberation Sans">A</text></svg>
<svg style="left:3px;top:928px" width="14" height="18" viewBox="0 0 14 18"><path d="M2 2H12M2 4.5H12M2 7H12" stroke="#9a9a9a"/><rect x="3" y="9" width="8" height="8" fill="#c0c0c0"/></svg>
<svg style="left:8px;top:953px" width="5" height="7" viewBox="0 0 5 7"><path d="M4.5 0V7L0.5 3.5Z" fill="#666"/></svg>
<div class="a" style="left:0px;top:1040px;width:44px;height:1px;background:#2a2a2a"></div>
<div class="a" style="left:44px;top:1040px;width:344px;height:1px;background:#9a9a9a"></div>
<div class="a" style="left:388px;top:1040px;width:1528px;height:1px;background:#2a2a2a"></div>
<div class="a" style="left:536px;top:1040px;width:48px;height:1px;background:#e08a30"></div>
<div class="a" style="left:683px;top:1040px;width:48px;height:1px;background:#9a9a9a"></div>
<div class="t" style="left:0px;top:1021px;color:#2a2a2a;">Specify the first point of the rectangle.</div>
<div class="t" style="left:1128px;top:1021px;color:#2a2a2a;letter-spacing:-0.25px">X: 32.000 Y: -17.000 Z: 0.000</div>
<div class="t" style="left:1290px;top:1021px;color:#2a2a2a;">Units: mm, deg</div>
<svg style="left:1381px;top:1020px" width="18" height="18" viewBox="0 0 18 18"><circle cx="7" cy="7" r="5.5" fill="#fff" stroke="#222" stroke-width="1.5"/><path d="M11 11L16 16" stroke="#222" stroke-width="2.4"/><path d="M5 4V10M5 4H8" stroke="#444" stroke-width="1"/></svg>
<svg style="left:1404px;top:1020px" width="18" height="18" viewBox="0 0 18 18"><circle cx="7" cy="7" r="5.5" fill="#fff" stroke="#222" stroke-width="1.5"/><path d="M11 11L16 16" stroke="#222" stroke-width="2.4"/></svg>
<svg style="left:1428px;top:1027px" width="7" height="4" viewBox="0 0 7 4"><path d="M0 0H7L3.5 3.5Z" fill="#333"/></svg>
<svg style="left:1440px;top:1020px" width="17" height="17" viewBox="0 0 17 17"><path d="M1 5H10V15H1Z" fill="#f4e860" stroke="#222"/><path d="M1 5L4 2H13L10 5Z" fill="#f8f0a0" stroke="#222"/><path d="M10 5L13 2V12L10 15Z" fill="#d8c840" stroke="#222"/><path d="M12 6H17M14.5 3.5V8.5" stroke="#e01020" stroke-width="1.4"/></svg>
<svg style="left:1463px;top:1027px" width="7" height="4" viewBox="0 0 7 4"><path d="M0 0H7L3.5 3.5Z" fill="#333"/></svg>
<svg style="left:1475px;top:1020px" width="17" height="17" viewBox="0 0 17 17"><path d="M1 5H11V16H1Z" fill="#2e6ab6"/><path d="M1 5L5 1H16L11 5Z" fill="#8ab4e8"/><path d="M11 5L16 1V12L11 16Z" fill="#4a86d0"/></svg>
<svg style="left:1498px;top:1027px" width="7" height="4" viewBox="0 0 7 4"><path d="M0 0H7L3.5 3.5Z" fill="#333"/></svg>
<svg style="left:1510px;top:1020px" width="17" height="17" viewBox="0 0 17 17"><path d="M1 7H6M3.5 4.5V9.5" stroke="#4a80c8" stroke-width="1.2"/><rect x="6" y="3" width="8" height="8" fill="#9ac0ec" stroke="#2a5aa0"/><rect x="8" y="9" width="7" height="7" fill="#fff" stroke="#333"/></svg>
<svg style="left:1533px;top:1027px" width="7" height="4" viewBox="0 0 7 4"><path d="M0 0H7L3.5 3.5Z" fill="#333"/></svg>
<svg style="left:1544px;top:1020px" width="17" height="17" viewBox="0 0 17 17"><path d="M1 16L5 6H16L12 16Z" fill="#3a7ed0"/><path d="M5 6L9 1H16L16 6Z" fill="#90baec"/></svg>
<svg style="left:1568px;top:1020px" width="17" height="17" viewBox="0 0 17 17"><circle cx="4.5" cy="10" r="3.5" fill="none" stroke="#333" stroke-width="1.4"/><circle cx="12" cy="12" r="3.5" fill="none" stroke="#333" stroke-width="1.4"/><path d="M1 10C1 4 3 2 6 2" stroke="#333" fill="none"/></svg>
<svg style="left:1588px;top:1027px" width="7" height="4" viewBox="0 0 7 4"><path d="M0 0H7L3.5 3.5Z" fill="#333"/></svg>
<svg style="left:1600px;top:1020px" width="17" height="17" viewBox="0 0 17 17"><path d="M1 5H11V16H1Z" fill="#a8c8ec" stroke="#222" stroke-width="1.3"/><path d="M1 5L5 1H16L11 5Z" fill="#d8e8f8" stroke="#222" stroke-width="1.3"/><path d="M11 5L16 1V12L11 16Z" fill="#7aa8dc" stroke="#222" stroke-width="1.3"/></svg>
<svg style="left:1621px;top:1027px" width="7" height="4" viewBox="0 0 7 4"><path d="M0 0H7L3.5 3.5Z" fill="#333"/></svg>
<svg style="left:1634px;top:1020px" width="17" height="17" viewBox="0 0 17 17"><path d="M1 9H11V16H1Z" fill="#2e6ad0" stroke="#10307a"/><path d="M1 9L4 6H14L11 9Z" fill="#6a9ae0" stroke="#10307a"/><path d="M11 9L14 6V13L11 16Z" fill="#2050a0"/><rect x="5" y="1" width="8" height="6" fill="#3a7ae0" stroke="#10307a"/></svg>
<svg style="left:1653px;top:1027px" width="7" height="4" viewBox="0 0 7 4"><path d="M0 0H7L3.5 3.5Z" fill="#333"/></svg>
<svg style="left:1666px;top:1020px" width="17" height="17" viewBox="0 0 17 17"><path d="M1 10V5C1 3.5 2 3 3 3H6V1L10 4L6 7V5H4V10Z" fill="#b0b0b0"/><path d="M8 7V15L10 13L12 16L13 15L11 12H14Z" fill="#fff" stroke="#9a9a9a" stroke-width=".9"/></svg>
<svg style="left:1695px;top:1021px" width="10" height="15" viewBox="0 0 10 15"><path d="M0.5 0.5V12L3.5 9.5L6 14.5L8 13.5L5.5 8.5H9.5Z" fill="#fff" stroke="#111" stroke-width="1"/></svg>
<svg style="left:1715px;top:1020px" width="15" height="17" viewBox="0 0 15 17"><rect x="0.5" y="1" width="7" height="5" fill="#fff" stroke="#e0e0e0"/><path d="M6 5V14L8 12L9.5 15L10.5 14.5L9 11.5H12Z" fill="#fff" stroke="#a0a0a0" stroke-width=".9"/></svg>
<div class="a" style="left:1736px;top:1018px;width:89px;height:21px;background:#e8e8e8;border:1px solid #c8c8c8"></div>
<div class="t" style="left:1740px;top:1022px;color:#a8a8a8;">Any</div>
<svg style="left:1813px;top:1028px" width="7" height="4" viewBox="0 0 7 4"><path d="M0 0H7L3.5 3.5Z" fill="#c0c0c0"/></svg>
<div class="a" style="left:1826px;top:1018px;width:65px;height:21px;background:#e8e8e8;border:1px solid #c8c8c8"></div>
<div class="t" style="left:1829px;top:1022px;color:#a8a8a8;">Default</div>
<svg style="left:1879px;top:1028px" width="7" height="4" viewBox="0 0 7 4"><path d="M0 0H7L3.5 3.5Z" fill="#c0c0c0"/></svg>
<svg style="left:1894px;top:1020px" width="17" height="15" viewBox="0 0 17 15"><rect x="5.5" y="0.5" width="6" height="4" fill="#e01818" stroke="#600" stroke-width=".6"/><path d="M8.5 4.5V7M3 9V7H14V9" stroke="#2050c0" fill="none"/><rect x="0.5" y="8.5" width="6" height="5" fill="#2a70e0" stroke="#0a2a7a" stroke-width=".6"/><rect x="10.5" y="8.5" width="6" height="5" fill="#f0d020" stroke="#0a2a7a" stroke-width=".6"/></svg>
</body></html>
